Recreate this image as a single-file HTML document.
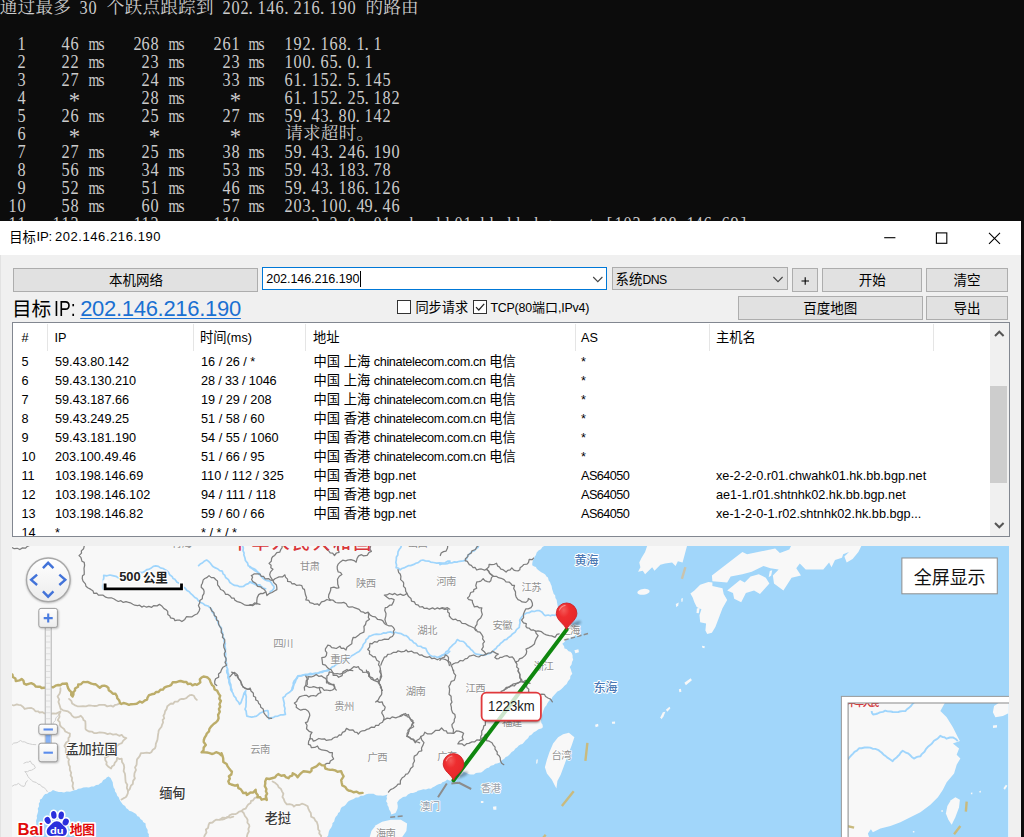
<!DOCTYPE html>
<html lang="zh"><head><meta charset="utf-8"><title>目标IP: 202.146.216.190</title>
<style>
html,body{margin:0;padding:0}
body{width:1024px;height:837px;overflow:hidden;position:relative;background:#0c0c0c;font-family:"Liberation Sans","Noto Sans CJK SC",sans-serif;font-size:13px;color:#000}
.cj{display:inline-block;white-space:nowrap;line-height:1}
.z{font-size:13.3px;letter-spacing:0}
.mt{font-family:"Liberation Sans","Noto Sans CJK SC",sans-serif}
.abs{position:absolute}
#term{position:absolute;left:0;top:0;width:1024px;height:221px;background:#0c0c0c;overflow:hidden}
.tl{position:absolute;left:-1.3px;height:18px;width:1024px}
.tc,.tc2{position:absolute;top:0;height:18px;line-height:18px;color:#ccc;font-family:"Liberation Serif","Noto Serif CJK SC",serif;font-size:17.5px;text-align:center}
.tc{width:8.92px;transform-origin:50% 83%;transform:translateY(-.4px) scale(.93,1.1)}
.tc2{width:17.84px;font-size:17.6px;transform:translate(.9px,-.6px)}
.tm{transform:translate(-.3px,-.4px) scale(.8,1.06)}
.tp{transform:translate(-2.2px,-.4px) scale(1,1.1)}
.ta{transform:translateY(4.2px) scale(1.3,1.35)}
#win{position:absolute;left:0;top:220.5px;width:1021px;height:620px;background:#f0f0f0;overflow:hidden}
#titlebar{position:absolute;left:0;top:0;width:1021px;height:34.3px;background:#fff}
#title{position:absolute;left:10px;top:9px;font-size:13.2px;line-height:16px;white-space:nowrap;letter-spacing:.05px}
.btn{position:absolute;box-sizing:border-box;background:#e1e1e1;border:1px solid #adadad;text-align:center;white-space:nowrap}
.btn .cj{position:absolute;left:50%;top:50%;transform:translate(-50%,-47%)}
.lc{position:absolute;white-space:nowrap;font-size:12.7px;line-height:16px;color:#000}
.hc{position:absolute;white-space:nowrap;font-size:12.7px;line-height:16px;color:#000}
</style></head><body>
<div id="term"><div class="tl" role="img" aria-label="通过最多 30 个跃点跟踪到 202.146.216.190 的路由" style="top:-1.0px"><span class="tc2" style="left:0.00px">通</span><span class="tc2" style="left:17.84px">过</span><span class="tc2" style="left:35.68px">最</span><span class="tc2" style="left:53.52px">多</span><span class="tc" style="left:80.28px">3</span><span class="tc" style="left:89.20px">0</span><span class="tc2" style="left:107.04px">个</span><span class="tc2" style="left:124.88px">跃</span><span class="tc2" style="left:142.72px">点</span><span class="tc2" style="left:160.56px">跟</span><span class="tc2" style="left:178.40px">踪</span><span class="tc2" style="left:196.24px">到</span><span class="tc" style="left:223.00px">2</span><span class="tc" style="left:231.92px">0</span><span class="tc" style="left:240.84px">2</span><span class="tc tp" style="left:249.76px">.</span><span class="tc" style="left:258.68px">1</span><span class="tc" style="left:267.60px">4</span><span class="tc" style="left:276.52px">6</span><span class="tc tp" style="left:285.44px">.</span><span class="tc" style="left:294.36px">2</span><span class="tc" style="left:303.28px">1</span><span class="tc" style="left:312.20px">6</span><span class="tc tp" style="left:321.12px">.</span><span class="tc" style="left:330.04px">1</span><span class="tc" style="left:338.96px">9</span><span class="tc" style="left:347.88px">0</span><span class="tc2" style="left:365.72px">的</span><span class="tc2" style="left:383.56px">路</span><span class="tc2" style="left:401.40px">由</span></div><div class="tl" role="img" aria-label="1    46 ms   268 ms   261 ms  192.168.1.1" style="top:35.0px"><span class="tc" style="left:17.84px">1</span><span class="tc" style="left:62.44px">4</span><span class="tc" style="left:71.36px">6</span><span class="tc tm" style="left:89.20px">m</span><span class="tc" style="left:98.12px">s</span><span class="tc" style="left:133.80px">2</span><span class="tc" style="left:142.72px">6</span><span class="tc" style="left:151.64px">8</span><span class="tc tm" style="left:169.48px">m</span><span class="tc" style="left:178.40px">s</span><span class="tc" style="left:214.08px">2</span><span class="tc" style="left:223.00px">6</span><span class="tc" style="left:231.92px">1</span><span class="tc tm" style="left:249.76px">m</span><span class="tc" style="left:258.68px">s</span><span class="tc" style="left:285.44px">1</span><span class="tc" style="left:294.36px">9</span><span class="tc" style="left:303.28px">2</span><span class="tc tp" style="left:312.20px">.</span><span class="tc" style="left:321.12px">1</span><span class="tc" style="left:330.04px">6</span><span class="tc" style="left:338.96px">8</span><span class="tc tp" style="left:347.88px">.</span><span class="tc" style="left:356.80px">1</span><span class="tc tp" style="left:365.72px">.</span><span class="tc" style="left:374.64px">1</span></div><div class="tl" role="img" aria-label="2    22 ms    23 ms    23 ms  100.65.0.1" style="top:53.0px"><span class="tc" style="left:17.84px">2</span><span class="tc" style="left:62.44px">2</span><span class="tc" style="left:71.36px">2</span><span class="tc tm" style="left:89.20px">m</span><span class="tc" style="left:98.12px">s</span><span class="tc" style="left:142.72px">2</span><span class="tc" style="left:151.64px">3</span><span class="tc tm" style="left:169.48px">m</span><span class="tc" style="left:178.40px">s</span><span class="tc" style="left:223.00px">2</span><span class="tc" style="left:231.92px">3</span><span class="tc tm" style="left:249.76px">m</span><span class="tc" style="left:258.68px">s</span><span class="tc" style="left:285.44px">1</span><span class="tc" style="left:294.36px">0</span><span class="tc" style="left:303.28px">0</span><span class="tc tp" style="left:312.20px">.</span><span class="tc" style="left:321.12px">6</span><span class="tc" style="left:330.04px">5</span><span class="tc tp" style="left:338.96px">.</span><span class="tc" style="left:347.88px">0</span><span class="tc tp" style="left:356.80px">.</span><span class="tc" style="left:365.72px">1</span></div><div class="tl" role="img" aria-label="3    27 ms    24 ms    33 ms  61.152.5.145" style="top:71.0px"><span class="tc" style="left:17.84px">3</span><span class="tc" style="left:62.44px">2</span><span class="tc" style="left:71.36px">7</span><span class="tc tm" style="left:89.20px">m</span><span class="tc" style="left:98.12px">s</span><span class="tc" style="left:142.72px">2</span><span class="tc" style="left:151.64px">4</span><span class="tc tm" style="left:169.48px">m</span><span class="tc" style="left:178.40px">s</span><span class="tc" style="left:223.00px">3</span><span class="tc" style="left:231.92px">3</span><span class="tc tm" style="left:249.76px">m</span><span class="tc" style="left:258.68px">s</span><span class="tc" style="left:285.44px">6</span><span class="tc" style="left:294.36px">1</span><span class="tc tp" style="left:303.28px">.</span><span class="tc" style="left:312.20px">1</span><span class="tc" style="left:321.12px">5</span><span class="tc" style="left:330.04px">2</span><span class="tc tp" style="left:338.96px">.</span><span class="tc" style="left:347.88px">5</span><span class="tc tp" style="left:356.80px">.</span><span class="tc" style="left:365.72px">1</span><span class="tc" style="left:374.64px">4</span><span class="tc" style="left:383.56px">5</span></div><div class="tl" role="img" aria-label="4     *       28 ms     *     61.152.25.182" style="top:89.0px"><span class="tc" style="left:17.84px">4</span><span class="tc ta" style="left:71.36px">*</span><span class="tc" style="left:142.72px">2</span><span class="tc" style="left:151.64px">8</span><span class="tc tm" style="left:169.48px">m</span><span class="tc" style="left:178.40px">s</span><span class="tc ta" style="left:231.92px">*</span><span class="tc" style="left:285.44px">6</span><span class="tc" style="left:294.36px">1</span><span class="tc tp" style="left:303.28px">.</span><span class="tc" style="left:312.20px">1</span><span class="tc" style="left:321.12px">5</span><span class="tc" style="left:330.04px">2</span><span class="tc tp" style="left:338.96px">.</span><span class="tc" style="left:347.88px">2</span><span class="tc" style="left:356.80px">5</span><span class="tc tp" style="left:365.72px">.</span><span class="tc" style="left:374.64px">1</span><span class="tc" style="left:383.56px">8</span><span class="tc" style="left:392.48px">2</span></div><div class="tl" role="img" aria-label="5    26 ms    25 ms    27 ms  59.43.80.142" style="top:107.0px"><span class="tc" style="left:17.84px">5</span><span class="tc" style="left:62.44px">2</span><span class="tc" style="left:71.36px">6</span><span class="tc tm" style="left:89.20px">m</span><span class="tc" style="left:98.12px">s</span><span class="tc" style="left:142.72px">2</span><span class="tc" style="left:151.64px">5</span><span class="tc tm" style="left:169.48px">m</span><span class="tc" style="left:178.40px">s</span><span class="tc" style="left:223.00px">2</span><span class="tc" style="left:231.92px">7</span><span class="tc tm" style="left:249.76px">m</span><span class="tc" style="left:258.68px">s</span><span class="tc" style="left:285.44px">5</span><span class="tc" style="left:294.36px">9</span><span class="tc tp" style="left:303.28px">.</span><span class="tc" style="left:312.20px">4</span><span class="tc" style="left:321.12px">3</span><span class="tc tp" style="left:330.04px">.</span><span class="tc" style="left:338.96px">8</span><span class="tc" style="left:347.88px">0</span><span class="tc tp" style="left:356.80px">.</span><span class="tc" style="left:365.72px">1</span><span class="tc" style="left:374.64px">4</span><span class="tc" style="left:383.56px">2</span></div><div class="tl" role="img" aria-label="6     *        *        *     请求超时。" style="top:125.0px"><span class="tc" style="left:17.84px">6</span><span class="tc ta" style="left:71.36px">*</span><span class="tc ta" style="left:151.64px">*</span><span class="tc ta" style="left:231.92px">*</span><span class="tc2" style="left:285.44px">请</span><span class="tc2" style="left:303.28px">求</span><span class="tc2" style="left:321.12px">超</span><span class="tc2" style="left:338.96px">时</span><span class="tc2" style="left:356.80px">。</span></div><div class="tl" role="img" aria-label="7    27 ms    25 ms    38 ms  59.43.246.190" style="top:143.0px"><span class="tc" style="left:17.84px">7</span><span class="tc" style="left:62.44px">2</span><span class="tc" style="left:71.36px">7</span><span class="tc tm" style="left:89.20px">m</span><span class="tc" style="left:98.12px">s</span><span class="tc" style="left:142.72px">2</span><span class="tc" style="left:151.64px">5</span><span class="tc tm" style="left:169.48px">m</span><span class="tc" style="left:178.40px">s</span><span class="tc" style="left:223.00px">3</span><span class="tc" style="left:231.92px">8</span><span class="tc tm" style="left:249.76px">m</span><span class="tc" style="left:258.68px">s</span><span class="tc" style="left:285.44px">5</span><span class="tc" style="left:294.36px">9</span><span class="tc tp" style="left:303.28px">.</span><span class="tc" style="left:312.20px">4</span><span class="tc" style="left:321.12px">3</span><span class="tc tp" style="left:330.04px">.</span><span class="tc" style="left:338.96px">2</span><span class="tc" style="left:347.88px">4</span><span class="tc" style="left:356.80px">6</span><span class="tc tp" style="left:365.72px">.</span><span class="tc" style="left:374.64px">1</span><span class="tc" style="left:383.56px">9</span><span class="tc" style="left:392.48px">0</span></div><div class="tl" role="img" aria-label="8    56 ms    34 ms    53 ms  59.43.183.78" style="top:161.0px"><span class="tc" style="left:17.84px">8</span><span class="tc" style="left:62.44px">5</span><span class="tc" style="left:71.36px">6</span><span class="tc tm" style="left:89.20px">m</span><span class="tc" style="left:98.12px">s</span><span class="tc" style="left:142.72px">3</span><span class="tc" style="left:151.64px">4</span><span class="tc tm" style="left:169.48px">m</span><span class="tc" style="left:178.40px">s</span><span class="tc" style="left:223.00px">5</span><span class="tc" style="left:231.92px">3</span><span class="tc tm" style="left:249.76px">m</span><span class="tc" style="left:258.68px">s</span><span class="tc" style="left:285.44px">5</span><span class="tc" style="left:294.36px">9</span><span class="tc tp" style="left:303.28px">.</span><span class="tc" style="left:312.20px">4</span><span class="tc" style="left:321.12px">3</span><span class="tc tp" style="left:330.04px">.</span><span class="tc" style="left:338.96px">1</span><span class="tc" style="left:347.88px">8</span><span class="tc" style="left:356.80px">3</span><span class="tc tp" style="left:365.72px">.</span><span class="tc" style="left:374.64px">7</span><span class="tc" style="left:383.56px">8</span></div><div class="tl" role="img" aria-label="9    52 ms    51 ms    46 ms  59.43.186.126" style="top:179.0px"><span class="tc" style="left:17.84px">9</span><span class="tc" style="left:62.44px">5</span><span class="tc" style="left:71.36px">2</span><span class="tc tm" style="left:89.20px">m</span><span class="tc" style="left:98.12px">s</span><span class="tc" style="left:142.72px">5</span><span class="tc" style="left:151.64px">1</span><span class="tc tm" style="left:169.48px">m</span><span class="tc" style="left:178.40px">s</span><span class="tc" style="left:223.00px">4</span><span class="tc" style="left:231.92px">6</span><span class="tc tm" style="left:249.76px">m</span><span class="tc" style="left:258.68px">s</span><span class="tc" style="left:285.44px">5</span><span class="tc" style="left:294.36px">9</span><span class="tc tp" style="left:303.28px">.</span><span class="tc" style="left:312.20px">4</span><span class="tc" style="left:321.12px">3</span><span class="tc tp" style="left:330.04px">.</span><span class="tc" style="left:338.96px">1</span><span class="tc" style="left:347.88px">8</span><span class="tc" style="left:356.80px">6</span><span class="tc tp" style="left:365.72px">.</span><span class="tc" style="left:374.64px">1</span><span class="tc" style="left:383.56px">2</span><span class="tc" style="left:392.48px">6</span></div><div class="tl" role="img" aria-label="10    58 ms    60 ms    57 ms  203.100.49.46" style="top:197.0px"><span class="tc" style="left:8.92px">1</span><span class="tc" style="left:17.84px">0</span><span class="tc" style="left:62.44px">5</span><span class="tc" style="left:71.36px">8</span><span class="tc tm" style="left:89.20px">m</span><span class="tc" style="left:98.12px">s</span><span class="tc" style="left:142.72px">6</span><span class="tc" style="left:151.64px">0</span><span class="tc tm" style="left:169.48px">m</span><span class="tc" style="left:178.40px">s</span><span class="tc" style="left:223.00px">5</span><span class="tc" style="left:231.92px">7</span><span class="tc tm" style="left:249.76px">m</span><span class="tc" style="left:258.68px">s</span><span class="tc" style="left:285.44px">2</span><span class="tc" style="left:294.36px">0</span><span class="tc" style="left:303.28px">3</span><span class="tc tp" style="left:312.20px">.</span><span class="tc" style="left:321.12px">1</span><span class="tc" style="left:330.04px">0</span><span class="tc" style="left:338.96px">0</span><span class="tc tp" style="left:347.88px">.</span><span class="tc" style="left:356.80px">4</span><span class="tc" style="left:365.72px">9</span><span class="tc tp" style="left:374.64px">.</span><span class="tc" style="left:383.56px">4</span><span class="tc" style="left:392.48px">6</span></div><div class="tl" role="img" aria-label="11   113 ms   112 ms   110 ms  xe-2-2-0.r01.chwahk01.hk.bb.bgp.net [103.198.146.69]" style="top:215.0px"><span class="tc" style="left:8.92px">1</span><span class="tc" style="left:17.84px">1</span><span class="tc" style="left:53.52px">1</span><span class="tc" style="left:62.44px">1</span><span class="tc" style="left:71.36px">3</span><span class="tc tm" style="left:89.20px">m</span><span class="tc" style="left:98.12px">s</span><span class="tc" style="left:133.80px">1</span><span class="tc" style="left:142.72px">1</span><span class="tc" style="left:151.64px">2</span><span class="tc tm" style="left:169.48px">m</span><span class="tc" style="left:178.40px">s</span><span class="tc" style="left:214.08px">1</span><span class="tc" style="left:223.00px">1</span><span class="tc" style="left:231.92px">0</span><span class="tc tm" style="left:249.76px">m</span><span class="tc" style="left:258.68px">s</span><span class="tc" style="left:285.44px">x</span><span class="tc" style="left:294.36px">e</span><span class="tc" style="left:303.28px">-</span><span class="tc" style="left:312.20px">2</span><span class="tc" style="left:321.12px">-</span><span class="tc" style="left:330.04px">2</span><span class="tc" style="left:338.96px">-</span><span class="tc" style="left:347.88px">0</span><span class="tc tp" style="left:356.80px">.</span><span class="tc" style="left:365.72px">r</span><span class="tc" style="left:374.64px">0</span><span class="tc" style="left:383.56px">1</span><span class="tc tp" style="left:392.48px">.</span><span class="tc" style="left:401.40px">c</span><span class="tc" style="left:410.32px">h</span><span class="tc" style="left:419.24px">w</span><span class="tc" style="left:428.16px">a</span><span class="tc" style="left:437.08px">h</span><span class="tc" style="left:446.00px">k</span><span class="tc" style="left:454.92px">0</span><span class="tc" style="left:463.84px">1</span><span class="tc tp" style="left:472.76px">.</span><span class="tc" style="left:481.68px">h</span><span class="tc" style="left:490.60px">k</span><span class="tc tp" style="left:499.52px">.</span><span class="tc" style="left:508.44px">b</span><span class="tc" style="left:517.36px">b</span><span class="tc tp" style="left:526.28px">.</span><span class="tc" style="left:535.20px">b</span><span class="tc" style="left:544.12px">g</span><span class="tc" style="left:553.04px">p</span><span class="tc tp" style="left:561.96px">.</span><span class="tc" style="left:570.88px">n</span><span class="tc" style="left:579.80px">e</span><span class="tc" style="left:588.72px">t</span><span class="tc" style="left:606.56px">[</span><span class="tc" style="left:615.48px">1</span><span class="tc" style="left:624.40px">0</span><span class="tc" style="left:633.32px">3</span><span class="tc tp" style="left:642.24px">.</span><span class="tc" style="left:651.16px">1</span><span class="tc" style="left:660.08px">9</span><span class="tc" style="left:669.00px">8</span><span class="tc tp" style="left:677.92px">.</span><span class="tc" style="left:686.84px">1</span><span class="tc" style="left:695.76px">4</span><span class="tc" style="left:704.68px">6</span><span class="tc tp" style="left:713.60px">.</span><span class="tc" style="left:722.52px">6</span><span class="tc" style="left:731.44px">9</span><span class="tc" style="left:740.36px">]</span></div></div>
<div id="win">
 <div id="titlebar">
  <div class="abs" style="left:9.3px;top:9.2px;line-height:16px;white-space:nowrap"><span class="z">目标</span></div>
  <div class="abs" style="left:36.6px;top:8.6px;font-size:13.2px;line-height:16px;white-space:nowrap;letter-spacing:-.3px">IP:</div>
  <div class="abs" style="left:55px;top:8.6px;font-size:13px;line-height:16px;white-space:nowrap;letter-spacing:.56px">202.146.216.190</div>
  <svg class="abs" style="left:870px;top:0" width="151" height="34" viewBox="870 220.5 151 34" fill="none" stroke="#000" stroke-width="1.1">
   <path d="M884.2 237.2H895.4"/>
   <rect x="936.4" y="232.4" width="10.4" height="10.4"/>
   <path d="M989 232.4L1000 243.4M1000 232.4L989 243.4"/>
  </svg>
 </div>
</div>
<!-- client controls: coordinates are page-absolute -->
<div id="client" class="abs" style="left:0;top:0;width:1021px;height:837px;overflow:hidden">
 <div class="abs" style="left:0;top:255px;width:1px;height:600px;background:#e2e2e2"></div>
 <div class="btn" style="left:13.3px;top:268.2px;width:245.2px;height:23.6px"><span class="cj" style="font-size:13.5px">本机网络</span></div>
 <div class="abs" style="left:262.2px;top:267.2px;width:345.2px;height:23px;box-sizing:border-box;border:1px solid #0078d7;background:#fff"></div>
 <span class="abs" style="left:266.3px;top:270.5px;font-size:12.6px;line-height:16px;white-space:nowrap;letter-spacing:-.1px">202.146.216.190</span>
 <div class="abs" style="left:360.3px;top:271px;width:1px;height:15.5px;background:#000"></div>
 <svg class="abs" style="left:590px;top:270px" width="16" height="16" viewBox="590 270 16 16" fill="none" stroke="#444" stroke-width="1.1"><path d="M593.2 277L597.8 281.6L602.4 277"/></svg>
 <div class="btn" style="left:611.6px;top:267.4px;width:176.2px;height:23px;text-align:left"></div>
 <span class="abs" style="left:615.6px;top:272px;font-size:12.2px;line-height:16px;white-space:nowrap;letter-spacing:-.55px"><span style="font-size:13.4px;letter-spacing:0">系统</span>DNS</span>
 <svg class="abs" style="left:770px;top:270px" width="16" height="16" viewBox="770 270 16 16" fill="none" stroke="#444" stroke-width="1.1"><path d="M773.4 277L778 281.6L782.6 277"/></svg>
 <div class="btn" style="left:791.8px;top:268.2px;width:26.2px;height:23.6px"></div>
 <svg class="abs" style="left:798px;top:273px" width="14" height="14" viewBox="798 273 14 14" stroke="#000" stroke-width="1.1"><path d="M801.5 281H809M805.2 277.3V284.7"/></svg>
 <div class="btn" style="left:821.9px;top:268.2px;width:100.6px;height:23.6px"><span class="cj" style="font-size:13.5px">开始</span></div>
 <div class="btn" style="left:926.2px;top:268.2px;width:81.6px;height:23.6px"><span class="cj" style="font-size:13.5px">清空</span></div>
 <div class="btn" style="left:738px;top:296.3px;width:184.5px;height:23.4px"><span class="cj" style="font-size:13.5px">百度地图</span></div>
 <div class="btn" style="left:926.2px;top:296.3px;width:81.6px;height:23.4px"><span class="cj" style="font-size:13.5px">导出</span></div>
 <!-- row 2 -->
 <div class="abs" style="left:11.9px;top:296px;font-size:20.6px;line-height:26px;white-space:nowrap"><span style="font-size:19.7px">目标</span></div>
 <div class="abs" style="left:54px;top:296.3px;font-size:22px;line-height:26px;white-space:nowrap;transform-origin:0 0;transform:scaleX(.8)">IP:</div>
 <div class="abs" style="left:80.2px;top:296.3px;font-size:22px;line-height:26px;white-space:nowrap;letter-spacing:-.3px;color:#1a70d2;text-decoration:underline;text-decoration-thickness:1.4px;text-underline-offset:1.9px">202.146.216.190</div>
 <div class="abs" style="left:396.8px;top:300.2px;width:14px;height:14px;box-sizing:border-box;border:1px solid #333;background:#fff"></div>
 <div class="abs" style="left:415.4px;top:299.6px;line-height:16px;white-space:nowrap"><span style="font-size:13.2px">同步请求</span></div>
 <div class="abs" style="left:473.4px;top:300.2px;width:14px;height:14px;box-sizing:border-box;border:1px solid #333;background:#fff"></div>
 <svg class="abs" style="left:473.4px;top:300.2px" width="14" height="14" viewBox="0 0 14 14" fill="none" stroke="#222" stroke-width="1.2"><path d="M3 7.2L5.8 10L11.2 3.8"/></svg>
 <span class="abs" style="left:490.4px;top:300.4px;font-size:12.4px;line-height:16px;white-space:nowrap;letter-spacing:-.2px">TCP(80<span style="font-size:13px;letter-spacing:0">端口</span>,IPv4)</span>
 <!-- listview -->
 <div class="abs" style="left:12px;top:322.3px;width:998px;height:214.8px;box-sizing:border-box;border:1px solid #828790;background:#fff"></div>
 <div class="abs" style="left:13.5px;top:323.3px;width:976px;height:212.8px;overflow:hidden">
  <div style="position:absolute;left:-13.5px;top:-323.3px">
   <div class="abs" style="left:47.3px;top:324px;width:1px;height:26.5px;background:#e5e5e5"></div>
   <div class="abs" style="left:193px;top:324px;width:1px;height:26.5px;background:#e5e5e5"></div>
   <div class="abs" style="left:305.3px;top:324px;width:1px;height:26.5px;background:#e5e5e5"></div>
   <div class="abs" style="left:575px;top:324px;width:1px;height:26.5px;background:#e5e5e5"></div>
   <div class="abs" style="left:709.3px;top:324px;width:1px;height:26.5px;background:#e5e5e5"></div>
   <div class="abs" style="left:933px;top:324px;width:1px;height:26.5px;background:#e5e5e5"></div>
   <span class="hc" style="left:21.5px;top:330.3px">#</span>
   <span class="hc" style="left:54.5px;top:330.3px">IP</span>
   <span class="hc" style="left:200px;top:330.3px"><span class="z">时间</span>(ms)</span>
   <span class="hc" style="left:313px;top:330.3px"><span class="z">地址</span></span>
   <span class="hc" style="left:581px;top:330.3px">AS</span>
   <span class="hc" style="left:716px;top:330.3px"><span class="z">主机名</span></span>
   <span class="lc" style="left:21.5px;top:353.9px">5</span><span class="lc" style="left:55.0px;top:353.9px">59.43.80.142</span><span class="lc" style="left:201.0px;top:353.9px">16 / 26 / *</span><span class="lc" style="left:313.5px;top:353.9px"><span class="z">中国</span> <span class="z">上海</span> <span style="letter-spacing:-0.38px">chinatelecom.com.cn</span> <span class="z">电信</span></span><span class="lc" style="left:581.0px;top:353.9px">*</span><span class="lc" style="left:21.5px;top:373.0px">6</span><span class="lc" style="left:55.0px;top:373.0px">59.43.130.210</span><span class="lc" style="left:201.0px;top:373.0px"><span style="letter-spacing:-0.15px">28 / 33 / 1046</span></span><span class="lc" style="left:313.5px;top:373.0px"><span class="z">中国</span> <span class="z">上海</span> <span style="letter-spacing:-0.38px">chinatelecom.com.cn</span> <span class="z">电信</span></span><span class="lc" style="left:581.0px;top:373.0px">*</span><span class="lc" style="left:21.5px;top:392.0px">7</span><span class="lc" style="left:55.0px;top:392.0px">59.43.187.66</span><span class="lc" style="left:201.0px;top:392.0px">19 / 29 / 208</span><span class="lc" style="left:313.5px;top:392.0px"><span class="z">中国</span> <span class="z">上海</span> <span style="letter-spacing:-0.38px">chinatelecom.com.cn</span> <span class="z">电信</span></span><span class="lc" style="left:581.0px;top:392.0px">*</span><span class="lc" style="left:21.5px;top:411.1px">8</span><span class="lc" style="left:55.0px;top:411.1px">59.43.249.25</span><span class="lc" style="left:201.0px;top:411.1px">51 / 58 / 60</span><span class="lc" style="left:313.5px;top:411.1px"><span class="z">中国</span> <span class="z">香港</span> <span style="letter-spacing:-0.38px">chinatelecom.com.cn</span> <span class="z">电信</span></span><span class="lc" style="left:581.0px;top:411.1px">*</span><span class="lc" style="left:21.5px;top:430.1px">9</span><span class="lc" style="left:55.0px;top:430.1px">59.43.181.190</span><span class="lc" style="left:201.0px;top:430.1px">54 / 55 / 1060</span><span class="lc" style="left:313.5px;top:430.1px"><span class="z">中国</span> <span class="z">香港</span> <span style="letter-spacing:-0.38px">chinatelecom.com.cn</span> <span class="z">电信</span></span><span class="lc" style="left:581.0px;top:430.1px">*</span><span class="lc" style="left:21.5px;top:449.2px">10</span><span class="lc" style="left:55.0px;top:449.2px">203.100.49.46</span><span class="lc" style="left:201.0px;top:449.2px">51 / 66 / 95</span><span class="lc" style="left:313.5px;top:449.2px"><span class="z">中国</span> <span class="z">香港</span> <span style="letter-spacing:-0.38px">chinatelecom.com.cn</span> <span class="z">电信</span></span><span class="lc" style="left:581.0px;top:449.2px">*</span><span class="lc" style="left:21.5px;top:468.3px">11</span><span class="lc" style="left:55.0px;top:468.3px">103.198.146.69</span><span class="lc" style="left:201.0px;top:468.3px">110 / 112 / 325</span><span class="lc" style="left:313.5px;top:468.3px"><span class="z">中国</span> <span class="z">香港</span> bgp.net</span><span class="lc" style="left:581.0px;top:468.3px"><span style="letter-spacing:-0.56px">AS64050</span></span><span class="lc" style="left:716.0px;top:468.3px">xe-2-2-0.r01.chwahk01.hk.bb.bgp.net</span><span class="lc" style="left:21.5px;top:487.3px">12</span><span class="lc" style="left:55.0px;top:487.3px">103.198.146.102</span><span class="lc" style="left:201.0px;top:487.3px">94 / 111 / 118</span><span class="lc" style="left:313.5px;top:487.3px"><span class="z">中国</span> <span class="z">香港</span> bgp.net</span><span class="lc" style="left:581.0px;top:487.3px"><span style="letter-spacing:-0.56px">AS64050</span></span><span class="lc" style="left:716.0px;top:487.3px">ae1-1.r01.shtnhk02.hk.bb.bgp.net</span><span class="lc" style="left:21.5px;top:506.4px">13</span><span class="lc" style="left:55.0px;top:506.4px">103.198.146.82</span><span class="lc" style="left:201.0px;top:506.4px">59 / 60 / 66</span><span class="lc" style="left:313.5px;top:506.4px"><span class="z">中国</span> <span class="z">香港</span> bgp.net</span><span class="lc" style="left:581.0px;top:506.4px"><span style="letter-spacing:-0.56px">AS64050</span></span><span class="lc" style="left:716.0px;top:506.4px">xe-1-2-0-1.r02.shtnhk02.hk.bb.bgp...</span><span class="lc" style="left:21.5px;top:525.4px">14</span><span class="lc" style="left:55.0px;top:525.4px">*</span><span class="lc" style="left:201.0px;top:525.4px">* / * / *</span>
  </div>
 </div>
 <!-- scrollbar -->
 <div class="abs" style="left:990px;top:323.3px;width:19px;height:212.8px;background:#f0f0f0"></div>
 <div class="abs" style="left:990px;top:386.2px;width:17.2px;height:96.6px;background:#cdcdcd"></div>
 <svg class="abs" style="left:990px;top:323px" width="19" height="213" viewBox="990 323 19 213" fill="none" stroke="#555" stroke-width="2"><path d="M995 336L999.3 331.7L1003.6 336"/><path d="M995 523L999.3 527.3L1003.6 523"/></svg>
<svg class="abs" style="left:12.1px;top:545.8px" width="997.1" height="291.2" viewBox="12.1 545.8 997.1 291.2"><rect x="0" y="540" width="1024" height="300" fill="#a1d6fa"/><path d="M4.0 538.0L7.0 538.2L8.5 537.7L11.1 538.4L13.2 537.6L16.4 538.4L18.8 537.7L20.9 537.6L23.0 538.3L25.6 537.6L27.8 538.3L31.0 537.6L33.0 538.2L34.8 537.6L37.5 537.7L39.5 537.7L42.4 538.2L45.2 537.8L47.7 538.3L50.1 537.6L52.2 538.3L54.9 537.8L56.5 538.2L59.4 537.7L62.1 538.1L64.2 538.2L66.6 537.8L69.2 538.1L71.7 538.3L73.1 537.6L75.9 538.3L78.1 537.6L81.4 538.2L82.7 537.5L86.2 537.5L87.8 538.2L91.0 537.6L92.8 537.5L95.1 537.7L97.8 538.4L100.1 538.1L101.9 537.5L104.6 538.3L106.8 537.7L110.0 537.5L112.4 538.2L115.0 538.1L117.2 537.5L119.3 538.2L121.1 537.6L124.3 538.3L126.3 537.4L128.6 538.1L131.3 537.7L133.9 538.1L136.5 538.2L138.3 537.5L140.5 538.1L143.9 537.6L146.2 538.3L148.1 538.2L150.2 537.6L152.6 537.5L155.0 538.2L157.4 538.2L160.6 538.1L163.1 538.2L164.5 538.2L167.7 537.5L169.7 538.0L172.5 537.6L175.0 538.1L176.4 537.6L179.9 537.6L182.0 538.0L184.0 537.7L187.1 537.6L189.0 538.0L191.5 537.6L193.3 537.6L195.7 538.3L199.1 538.1L200.8 537.5L202.8 538.1L205.7 538.1L207.8 538.2L211.1 538.1L213.1 538.2L215.3 538.2L217.3 537.4L220.5 537.5L222.5 538.1L224.5 538.0L227.3 537.5L230.1 538.0L232.6 537.4L235.0 538.2L236.7 538.0L239.7 538.0L242.1 538.0L244.1 538.1L246.2 538.1L248.8 538.2L251.4 537.6L253.6 538.2L256.5 537.9L258.8 537.6L261.4 538.1L263.2 537.4L266.0 538.1L268.5 537.4L270.4 538.1L272.5 538.0L275.3 537.5L278.0 537.4L280.7 538.0L282.2 537.9L285.0 537.5L288.0 537.9L290.4 537.5L292.6 538.1L294.3 537.4L297.5 537.9L299.5 537.3L301.6 537.9L304.6 537.5L306.3 537.3L309.1 538.0L311.8 537.5L314.1 537.3L316.7 538.0L319.2 537.9L320.5 537.3L323.2 538.0L325.9 537.3L328.6 537.3L330.3 537.3L333.2 538.0L335.2 537.2L338.0 538.0L340.8 537.4L342.9 538.0L345.4 537.9L347.4 537.5L349.7 538.0L352.1 537.4L354.7 538.0L356.6 537.5L359.5 537.4L362.5 538.1L364.2 537.2L366.8 537.9L369.2 538.0L371.3 538.0L373.9 538.0L376.3 537.4L378.2 538.0L381.4 537.3L383.5 537.3L386.2 537.9L388.6 537.2L390.8 537.9L392.7 537.4L395.5 537.9L397.6 537.4L400.4 537.8L403.2 537.9L405.0 538.0L407.5 538.1L410.1 537.4L412.7 537.2L414.3 537.9L417.3 537.3L419.9 537.9L422.5 537.4L423.8 537.3L426.2 537.2L429.4 537.8L431.8 537.3L434.1 537.3L436.4 537.4L439.3 538.0L440.6 537.4L443.2 537.8L445.8 537.4L448.4 537.8L451.4 537.9L452.8 537.2L455.3 537.9L458.3 537.4L461.0 537.8L462.8 537.3L465.7 537.9L467.3 537.2L469.9 537.9L472.3 537.2L475.3 537.8L477.3 537.2L479.9 537.7L481.5 538.0L484.4 537.3L487.0 537.8L489.7 537.1L491.9 537.7L493.5 537.2L497.0 537.4L498.6 537.7L500.7 537.2L503.9 537.8L506.6 537.4L508.3 537.9L510.5 537.3L512.8 537.7L515.5 537.2L518.5 537.9L520.4 537.3L522.4 538.0L525.8 537.1L527.1 537.8L529.5 537.8L532.5 537.1L535.1 537.9L537.3 537.2L539.9 537.7L541.7 537.8L544.5 537.7L544.7 540.3L544.1 542.7L544.9 545.5L542.5 546.8L541.0 549.1L538.6 550.4L536.8 552.3L535.9 555.0L534.6 556.5L534.1 558.2L532.8 560.7L532.4 563.1L532.3 565.0L534.3 566.4L536.1 566.8L536.7 568.4L538.3 569.8L540.3 571.4L541.8 572.2L543.8 573.4L545.3 574.2L546.8 576.5L548.1 577.4L548.7 580.0L550.2 582.1L550.9 584.1L551.7 585.9L552.2 588.9L553.1 591.3L553.6 593.2L555.3 595.4L555.5 597.9L556.8 599.9L557.1 602.0L557.6 604.9L558.0 606.8L557.6 608.7L558.9 611.2L559.6 613.6L561.3 615.6L561.8 617.6L563.8 619.4L566.1 621.0L568.1 622.1L569.8 623.9L572.7 624.8L575.7 626.2L577.4 627.8L578.0 629.0L578.0 631.3L577.0 633.2L575.2 634.6L574.6 636.3L571.9 636.9L570.4 638.2L568.2 638.2L565.9 639.9L564.6 641.7L562.4 643.5L564.2 646.0L564.6 648.2L566.6 648.9L568.7 651.0L570.6 651.5L571.9 653.1L572.7 655.3L572.7 657.3L573.3 659.6L572.1 661.7L571.7 664.3L569.9 666.9L570.9 669.0L571.5 671.2L572.4 673.6L570.5 675.9L570.2 678.6L568.1 681.1L566.8 683.9L564.6 685.6L563.1 687.4L561.0 689.2L559.7 690.4L557.5 691.3L556.2 692.8L554.6 694.6L552.5 696.7L551.8 698.5L549.2 700.5L547.5 703.0L546.3 705.6L545.0 706.7L543.6 709.7L542.8 712.6L542.3 714.4L541.9 716.8L541.1 719.6L541.4 722.7L542.6 724.3L543.0 727.1L541.5 728.2L538.6 729.1L535.9 731.0L533.9 732.0L531.3 734.8L529.4 735.6L528.3 737.9L525.5 740.2L524.3 741.8L522.5 743.8L520.6 744.3L518.9 745.4L517.1 747.2L515.5 748.3L513.9 750.6L511.8 751.8L509.9 754.0L507.8 756.1L505.8 756.7L504.4 758.6L501.5 760.2L500.0 762.3L497.1 763.3L495.2 763.5L493.9 764.9L490.9 765.5L488.8 767.5L487.2 767.8L484.6 769.5L483.4 770.9L481.2 772.3L478.0 772.5L476.0 772.9L474.0 774.2L470.9 774.2L468.4 773.9L466.6 772.7L463.6 771.6L462.2 774.2L460.6 775.1L460.0 777.2L458.0 777.6L455.4 780.0L453.4 780.6L451.7 780.6L449.3 780.3L447.3 779.3L445.4 781.1L442.4 782.1L441.2 783.6L439.3 783.8L437.0 784.9L434.6 786.2L432.5 787.2L431.1 788.5L428.7 788.2L426.0 789.2L423.4 789.0L421.0 789.8L417.8 790.5L416.8 791.6L413.1 792.7L410.9 792.9L408.0 794.4L406.2 796.3L403.1 796.9L401.1 798.2L399.2 799.5L397.3 802.3L397.6 804.2L397.9 805.9L397.7 808.0L397.0 810.1L395.6 812.9L393.5 813.5L391.4 814.2L390.8 811.9L389.1 809.0L388.7 806.9L387.4 804.8L387.6 803.1L386.2 801.1L387.1 798.3L386.6 796.5L387.6 794.3L385.5 795.0L383.1 795.5L380.9 795.3L378.4 795.4L376.2 795.0L373.6 793.6L370.9 793.5L368.6 793.5L366.2 794.0L363.3 795.5L360.9 795.5L358.3 797.2L355.9 797.3L353.7 798.7L351.1 799.9L348.9 800.9L347.4 802.4L346.0 804.3L344.4 805.7L342.0 806.7L340.9 808.4L339.8 811.7L338.2 812.9L337.6 814.9L335.7 816.8L334.9 818.5L334.3 821.2L332.5 823.0L332.5 824.8L331.4 827.2L329.7 829.6L328.9 831.5L328.2 835.2L327.0 836.9L327.2 839.4L326.0 842.2L326.3 844.6L325.3 847.0L323.0 847.2L321.3 847.3L318.7 847.3L315.9 846.8L313.1 847.2L311.7 847.4L308.6 846.7L306.9 846.6L303.4 847.3L301.5 847.4L299.6 846.7L296.5 847.3L294.7 846.7L292.2 847.3L290.0 847.3L286.6 846.6L284.9 847.4L282.5 846.6L279.9 847.2L278.0 847.2L275.4 846.6L273.3 847.2L269.9 846.7L267.9 847.3L265.4 846.8L263.4 846.5L260.7 847.3L258.5 846.7L256.6 846.7L253.8 846.7L251.8 847.4L249.1 846.7L246.1 847.4L244.6 846.7L242.1 847.3L239.8 847.2L237.0 846.6L234.9 847.4L231.9 847.2L230.0 846.7L227.0 847.4L224.4 846.7L222.3 846.5L220.1 847.3L217.7 847.2L215.2 847.2L212.5 846.5L211.1 847.2L208.8 847.3L205.6 846.7L203.7 847.2L200.5 846.5L198.1 847.2L195.8 846.6L193.8 847.3L191.9 846.5L189.4 847.3L186.9 846.7L184.0 847.3L182.4 846.6L178.9 846.6L176.6 847.2L174.1 846.6L172.6 846.7L169.4 847.1L167.6 846.7L164.8 847.1L162.9 846.7L160.7 847.3L158.4 846.5L155.1 847.3L153.7 847.2L150.7 846.5L150.1 844.8L150.4 842.1L149.5 840.7L150.0 838.3L148.8 835.9L149.0 834.0L147.7 832.4L147.8 829.7L146.3 827.4L145.7 825.0L145.7 823.2L143.2 821.7L142.7 820.2L140.6 818.9L139.2 816.6L137.5 816.0L136.2 813.7L134.4 812.8L131.9 811.2L129.2 810.6L128.1 809.0L126.4 808.0L125.2 805.8L123.1 804.6L120.9 801.6L119.7 799.5L118.7 796.9L117.4 795.8L116.4 792.9L115.1 791.2L114.9 789.0L113.7 787.4L113.1 784.7L112.8 782.0L111.9 780.4L110.7 777.9L108.6 776.2L106.7 777.2L105.8 778.5L103.1 780.1L101.9 782.3L100.0 783.3L98.6 784.6L96.2 784.7L93.9 786.4L91.5 786.4L89.0 787.4L86.5 787.0L83.3 787.4L80.9 788.3L78.2 788.6L76.5 789.8L74.1 790.1L72.2 790.8L70.1 791.5L66.7 791.3L64.1 792.3L61.5 791.8L58.8 791.9L57.1 791.2L55.5 790.8L53.0 789.7L51.0 791.6L48.9 792.1L47.4 793.5L45.3 793.9L43.8 795.4L41.8 798.5L39.9 799.5L40.1 801.6L38.9 803.4L39.1 806.0L37.8 808.6L38.3 810.5L37.8 812.8L36.8 815.9L37.1 817.7L36.1 820.8L36.4 823.2L36.0 825.5L34.7 828.1L34.7 829.4L33.4 831.5L33.0 834.5L32.6 835.8L31.7 838.4L31.6 840.1L30.7 842.9L30.8 845.0L30.0 846.9L27.5 847.1L25.3 846.6L22.9 847.0L21.0 846.9L17.9 846.7L16.4 846.1L13.3 846.1L11.3 846.6L9.0 845.7L6.2 845.7L4.0 846.4Z" fill="#f8f8f8"/><path d="M647.6 544.7L687.4 544.7L682.7 562.3L678.0 561.1L675.7 565.8L672.2 562.3L665.2 563.4L660.5 564.6L654.6 570.5L652.3 567.0L645.2 574.0L642.9 570.5L638.2 571.6L640.5 567.0L639.4 562.3L641.7 557.6L645.2 551.7Z" fill="#f8f8f8"/><path d="M690.5 593.4L694.5 590.4L700.3 584.5L708.5 581.7L712.5 582.2L712.5 585.7L722.6 588.0L723.8 593.9L727.3 599.8L722.6 608.0L719.1 617.3L715.5 626.7L712.0 632.6L707.3 633.8L705.5 630.2L706.2 623.2L700.3 622.0L699.6 615.0L701.5 609.1L696.8 606.8L694.5 602.1L692.8 597.4Z" fill="#f8f8f8"/><path d="M712.0 575.2L742.5 551.7L747.2 554.1L775.3 548.2L780.0 552.9L789.4 549.4L791.7 544.7L862.0 544.7L858.5 551.7L852.7 558.8L846.8 562.3L844.5 556.4L849.1 551.7L843.3 554.1L842.1 557.6L835.1 559.9L831.6 567.0L829.2 562.3L823.4 569.3L805.8 569.3L799.9 563.4L796.4 568.1L801.1 575.2L791.7 577.5L783.5 590.4L774.1 583.4L773.0 575.2L778.8 569.3L770.6 568.1L763.6 565.8L751.9 571.6L742.5 574.0L730.8 576.3L727.3 582.2L712.5 581.0Z" fill="#f8f8f8"/><path d="M727.3 590.4L740.2 579.8L744.8 582.2L750.7 576.3L758.9 574.0L765.9 577.5L769.5 583.4L760.1 593.9L754.2 590.4L746.0 592.7L741.3 602.1L734.3 598.6L733.1 592.7Z" fill="#f8f8f8"/><path d="M769.9 570.9L772.3 570.0L771.3 575.2L768.8 577.0Z" fill="#f8f8f8"/><path d="M675.9 603.8L678.8 602.3L678.3 605.2L676.4 607.0Z" fill="#f8f8f8"/><path d="M681.3 598.6L683.0 597.7L682.7 601.4L681.6 601.9Z" fill="#f8f8f8"/><path d="M697.0 608.4L699.8 607.5L698.9 613.1L696.6 612.7Z" fill="#f8f8f8"/><path d="M569.0 732.5L574.5 737.0L572.0 744.5L568.2 754.5L564.5 764.5L560.8 774.5L557.5 780.8L556.5 788.2L554.5 784.5L552.0 779.5L547.0 773.2L545.0 767.0L547.0 759.5L549.5 752.0L553.2 743.2L558.2 737.0L563.2 734.0Z" fill="#f8f8f8"/><path d="M369.8 837.0L371.5 830.8L376.0 825.0L382.2 821.5L391.0 819.5L401.0 819.5L407.2 823.2L406.5 830.8L402.2 837.0Z" fill="#f8f8f8"/><path d="M574.5 650.0L578.5 649.0L579.0 652.0L575.5 653.0Z" fill="#f8f8f8"/><path d="M595.2 724.5L598.2 723.5L598.5 726.0L595.8 727.0Z" fill="#f8f8f8"/><path d="M612.0 721.5L615.2 721.2L615.2 723.5L612.2 723.5Z" fill="#f8f8f8"/><path d="M660.5 717.0L663.0 712.0L665.5 711.5L663.5 716.5L661.5 719.0Z" fill="#f8f8f8"/><path d="M666.0 709.5L669.5 706.5L670.5 708.0L667.5 711.5Z" fill="#f8f8f8"/><path d="M679.0 689.0L681.0 688.5L681.5 691.5L679.5 692.0Z" fill="#f8f8f8"/><path d="M536.5 759.5L538.0 759.0L537.5 763.0L536.2 763.5Z" fill="#f8f8f8"/><path d="M702.0 645.5L705.0 646.0L704.5 648.0L702.5 647.5Z" fill="#f8f8f8"/><path d="M684.5 682.5L690.8 678.0L692.0 680.0L686.0 685.0Z" fill="#f8f8f8"/><path d="M493.0 806.5L496.5 806.0L496.5 809.5L493.5 809.5Z" fill="#f8f8f8"/><path d="M481.0 800.8L483.5 800.8L483.5 802.8L481.0 802.8Z" fill="#f8f8f8"/><ellipse cx="643.6" cy="591.6" rx="6.2" ry="2.9" transform="rotate(-8 643.6 591.6)" fill="#f8f8f8"/><path d="M103.0 588.8L102.7 585.7L103.6 583.0L103.3 579.9L103.9 577.8L103.8 575.1L107.1 575.6L110.0 574.8L112.7 575.4L116.0 576.1L118.4 577.7L120.4 578.5L122.7 577.3L124.9 575.9L127.5 574.0L129.4 573.4L131.5 572.7L135.0 573.0L136.6 572.3L140.0 572.1L142.1 572.5L144.4 571.4L146.8 569.4L148.6 569.2L150.9 568.1L153.4 566.1L155.8 565.6L158.5 566.1L160.5 567.7L163.3 568.3L165.3 569.7L167.1 570.5L168.6 572.2L169.7 574.5L172.3 576.4L173.1 578.2L175.0 579.1L177.1 582.0L179.5 583.0L181.4 584.6L182.5 586.4L185.4 588.0L186.7 590.0L189.4 591.6L190.9 593.5L192.7 594.9L194.9 597.3L197.0 598.4L198.6 600.7L200.8 602.3L203.6 603.6L205.0 604.9L208.1 605.8L210.3 607.6L211.9 609.6L212.5 612.1L214.0 613.5L215.1 616.5L216.0 618.3L217.6 620.3L218.1 622.6L219.5 625.6L221.5 627.7L221.7 631.0L222.7 632.6L223.0 636.3L224.1 638.4L224.2 641.3L225.5 643.4L224.9 645.6L225.6 648.9L225.3 650.9L225.8 654.0L225.4 656.1L226.3 658.8L225.6 661.1L226.7 663.0L226.7 666.8L227.8 669.0L227.9 672.2L228.9 674.6L228.5 676.8L229.6 678.8L229.8 681.8L231.0 684.6L230.8 687.0L232.1 690.0" fill="none" stroke="#9fd5fc" stroke-width="1.7" stroke-linejoin="round" stroke-linecap="round" /><path d="M198.7 565.4L200.3 563.9L202.4 562.8L204.2 561.1L206.7 559.8L208.4 560.9L210.3 562.8L212.7 566.0L214.4 567.2L217.5 568.5L219.8 570.4L222.3 570.9L223.2 573.7L224.9 575.0L225.7 577.3L228.5 579.5L230.0 582.3L232.1 583.7L234.7 585.2L237.3 585.4L239.2 586.4L241.7 586.5L243.5 586.3L245.7 584.4L248.4 583.4L250.2 581.6L252.3 582.3L255.2 583.7L257.7 584.6L260.1 584.6" fill="none" stroke="#9fd5fc" stroke-width="1.7" stroke-linejoin="round" stroke-linecap="round" /><path d="M242.6 545.5L243.4 547.7L243.1 550.4L244.2 552.9L243.9 554.6L245.0 557.5L245.5 560.3L247.7 562.9L248.3 565.5L250.6 566.6L252.5 568.6L255.1 570.6L257.5 571.8L259.8 573.5" fill="none" stroke="#9fd5fc" stroke-width="1.7" stroke-linejoin="round" stroke-linecap="round" /><path d="M292.0 690.0L292.3 687.5L293.5 684.9L293.3 682.8L294.3 680.7L296.0 679.0L297.2 676.9L299.0 675.9L301.7 675.7L303.8 674.8L306.7 675.2L308.6 674.4L311.3 674.5L312.9 673.7L316.0 673.6L318.4 673.0L321.3 671.6L323.3 670.9L325.6 670.8L328.0 669.6L330.2 668.9L332.3 666.7L334.2 666.2L335.5 664.8L337.5 663.5L339.9 662.7L341.7 660.9L344.0 660.5L347.1 658.0L349.8 657.5L351.4 655.7L354.1 654.3L356.3 652.9L359.3 651.2L361.0 649.2L362.7 646.6L363.3 644.3L365.6 641.8L366.1 639.5L367.9 638.1L369.4 635.9L371.0 635.6L374.1 634.3L376.5 633.9L379.0 634.1L381.5 633.8L383.5 632.7L386.4 632.9L387.8 632.1L390.6 631.7L393.7 632.9L395.5 632.1L398.4 633.0L401.4 633.5L404.0 635.1L406.3 635.5L408.5 637.3L410.1 639.5L412.2 640.4L413.8 642.6L415.8 643.3L417.7 645.8L421.1 646.2L422.5 647.5L425.9 648.2L427.1 651.1L428.1 652.7L430.1 655.0L432.6 656.3L434.7 656.1L437.5 657.4L440.1 656.1L443.2 654.9L445.8 654.3L447.9 652.9L449.8 651.1" fill="none" stroke="#9fd5fc" stroke-width="1.7" stroke-linejoin="round" stroke-linecap="round" /><path d="M401.4 545.5L400.9 547.2L399.3 549.3L398.1 551.6L397.9 554.7L396.5 556.7L396.4 559.6L395.9 562.1L396.7 565.1L396.2 567.4L398.7 568.1L400.2 569.7L401.9 568.3L404.9 567.4L406.4 566.6L408.9 565.4L410.7 565.4L414.0 564.2L415.9 563.1L418.3 562.4L420.9 560.3L423.0 559.8L425.5 560.7L428.8 560.9L430.7 561.9L433.6 562.3L436.8 563.0L439.4 562.7L442.4 563.0L445.3 562.6L447.8 560.9L450.1 560.9" fill="none" stroke="#9fd5fc" stroke-width="1.7" stroke-linejoin="round" stroke-linecap="round" /><path d="M250.0 567.3L253.6 568.3L255.7 569.6L257.7 571.9L259.0 574.0L260.7 575.5L262.6 577.6L264.5 579.2L267.1 580.5L269.9 581.0L271.3 582.4L272.4 584.5L274.0 586.2L274.1 588.0L272.3 590.3L270.3 591.6" fill="none" stroke="#9fd5fc" stroke-width="1.7" stroke-linejoin="round" stroke-linecap="round" /><path d="M250.0 582.0L252.5 582.9L254.1 583.6L257.1 585.3L259.8 585.7L261.6 586.4L263.3 587.9L265.7 588.6" fill="none" stroke="#9fd5fc" stroke-width="1.7" stroke-linejoin="round" stroke-linecap="round" /><path d="M440.0 657.2L442.1 655.0L445.1 653.5L446.1 651.6L448.2 650.5L449.7 647.9L451.5 646.2L453.2 644.4L455.5 642.6L457.3 639.4L459.9 640.8L463.5 641.3L465.7 643.4L467.1 645.5L469.5 647.3L471.2 649.6L472.5 650.4L474.0 652.4L476.4 654.0L479.7 654.4L482.6 655.2L484.9 655.0L486.8 654.1L489.8 653.2L492.8 651.5L494.5 649.3L496.1 648.3L497.4 646.2L499.5 644.8L500.5 643.3L502.7 641.7L504.6 639.7L506.8 639.2L508.2 637.5L511.1 635.6L512.2 634.0L515.3 631.9L516.6 629.4L519.4 627.2L519.7 624.2L520.2 622.7L519.8 620.0L521.0 618.1L522.2 616.3L524.2 614.3L526.7 612.8L529.3 612.5L531.7 611.0L534.6 611.3L537.1 610.3L539.6 610.5L541.9 611.7L543.8 614.1L545.3 615.4L548.3 614.8L550.6 615.6L552.3 614.8L555.1 615.1L557.1 614.0" fill="none" stroke="#9fd5fc" stroke-width="1.7" stroke-linejoin="round" stroke-linecap="round" /><path d="M440.0 564.4L442.4 563.6L445.1 563.8L447.3 563.4L449.7 562.4L451.8 562.8L454.5 561.7L456.9 561.9L459.5 561.1L463.2 560.6L465.3 560.1L466.8 558.5L467.9 555.5L469.7 553.9L471.6 551.6L474.5 550.5L475.9 548.5L478.2 547.0L478.8 545.2" fill="none" stroke="#9fd5fc" stroke-width="1.7" stroke-linejoin="round" stroke-linecap="round" /><path d="M226.8 670.0L227.0 672.5L228.2 674.7L228.0 677.4L229.1 679.7L229.0 682.0L229.7 684.2L230.8 686.5L230.8 689.3L232.0 691.4L233.2 693.2L234.0 695.7L235.9 697.6L236.4 699.5L238.7 702.1L239.7 704.1L241.1 702.4L242.2 699.1L242.9 697.3L243.5 695.2L244.1 693.1L245.8 690.6L245.4 692.8L246.4 696.5L246.2 699.3L246.3 701.7L246.1 704.0L246.0 706.6L245.1 709.0L246.3 711.0L246.5 713.6L247.0 716.0L249.2 716.5L251.8 716.9L254.2 716.5L256.6 715.9L258.2 714.6L259.9 713.1L262.1 712.1L265.1 710.6L267.9 710.3L268.6 713.4L268.3 716.3L269.1 718.8L271.1 717.6L273.8 717.1L275.4 716.1L278.0 715.9L280.5 714.7L283.0 714.6L285.5 714.1L284.7 710.7L285.1 708.4L284.1 705.2L284.4 703.1L283.6 700.1L283.1 697.4L285.1 696.2L286.2 694.2L289.2 692.3L290.6 691.2L293.1 688.4L293.5 686.1L294.2 683.9L295.4 681.8L296.2 679.3L297.4 678.0L297.9 675.7L300.5 675.5L303.6 674.6L306.0 674.1L308.7 674.1L310.1 673.2L312.4 673.6L315.6 672.9L317.7 673.3L319.6 672.1L322.5 672.1L325.4 670.6L327.7 670.8L329.3 669.8" fill="none" stroke="#9fd5fc" stroke-width="1.7" stroke-linejoin="round" stroke-linecap="round" /><path d="M10.0 744.9L12.4 744.2L13.8 742.9L17.1 742.5L18.7 741.5L20.7 740.3L22.5 741.6L25.0 741.7L27.1 743.0L29.5 743.6L32.6 744.3L35.9 744.5" fill="none" stroke="#cfcfcf" stroke-width="1.0" stroke-linejoin="round" stroke-linecap="round" /><path d="M24.0 763.1L26.4 762.0L28.7 761.9L30.3 760.7L32.3 764.0L33.9 764.5L35.5 767.6L33.8 768.8L31.7 770.0L29.2 770.4L27.7 771.5L24.9 771.4L26.5 773.2L28.1 776.4L29.7 778.4L31.7 780.1L33.1 781.4L36.4 782.3L38.1 784.0L40.2 784.3L42.0 786.6L44.0 787.3L46.4 789.6L47.3 791.4" fill="none" stroke="#cfcfcf" stroke-width="1.0" stroke-linejoin="round" stroke-linecap="round" /><path d="M10.0 786.8L12.3 786.0L14.5 784.7L16.4 784.6L18.5 783.2L21.4 785.6L24.2 786.3L25.4 784.5L25.6 782.8L27.5 780.5" fill="none" stroke="#cfcfcf" stroke-width="1.0" stroke-linejoin="round" stroke-linecap="round" /><path d="M60.5 711.6L58.7 713.5L58.2 715.5L55.9 717.8L55.5 720.2L53.5 722.3L52.8 724.4" fill="none" stroke="#cfcfcf" stroke-width="1.0" stroke-linejoin="round" stroke-linecap="round" /><path d="M272.7 781.3L275.5 782.9L277.8 785.0L278.7 787.0L280.9 788.5L282.2 791.4L283.5 793.6L282.5 796.8L283.9 798.9L284.8 801.5L286.9 804.2L289.7 804.0L292.5 804.6L294.0 806.4L296.3 804.7L299.6 804.8L302.0 803.5L304.6 804.3L307.8 806.1L308.3 808.2L309.5 810.7L310.9 812.8L311.3 816.6L314.2 817.9L315.4 820.4L316.9 821.8L317.8 824.5L318.1 826.1L318.3 829.3L319.7 830.9L319.3 833.2L321.3 835.7L320.9 838.2" fill="none" stroke="#d0c9ba" stroke-width="1.8" stroke-linejoin="round" stroke-linecap="round" /><path d="M257.1 797.0L254.6 798.0L253.0 800.3L251.1 800.6L250.7 802.9L248.3 804.4L246.9 806.4L245.7 808.5L243.3 809.1L241.7 810.9L239.2 811.4L237.3 813.0L235.8 813.9L232.3 814.0L229.6 815.1L228.6 816.9L226.0 817.9L224.2 819.0L222.3 819.4L219.8 819.5" fill="none" stroke="#d0c9ba" stroke-width="1.8" stroke-linejoin="round" stroke-linecap="round" /><path d="M241.5 810.6L243.8 812.8L245.0 815.8L246.9 818.1L247.7 819.8L247.5 822.6L249.2 824.6L249.5 826.2L248.4 828.9L249.0 831.3L247.7 833.5L247.1 835.7L246.9 837.9" fill="none" stroke="#d0c9ba" stroke-width="1.8" stroke-linejoin="round" stroke-linecap="round" /><path d="M10.0 704.0L12.3 704.8L13.9 705.3L16.9 704.1L18.7 704.6L20.9 704.9L23.5 707.0L24.7 708.8L28.2 707.9L31.5 707.8L33.6 708.8L35.5 711.1L38.1 711.1L39.6 712.3L42.5 711.9L44.3 713.2L47.2 712.7L49.9 713.9L53.0 713.1L56.3 713.4L57.9 712.6L60.4 711.3" fill="none" stroke="#d0c9ba" stroke-width="1.8" stroke-linejoin="round" stroke-linecap="round" /><path d="M60.5 687.9L60.5 690.5L59.8 693.3L57.7 696.4L59.3 699.3L58.5 701.7L59.7 705.1L60.8 708.7L63.2 710.1L65.7 710.7L68.1 711.3L70.8 713.3L72.0 715.4L74.2 717.2L76.4 717.3L78.9 716.7L80.9 715.6L82.9 717.8L83.6 719.9L85.4 721.1L85.6 723.9L85.6 725.7L85.6 728.8L86.8 730.1L89.0 731.3L91.9 731.4L94.1 732.9L96.6 733.0L99.7 732.3L102.4 732.4L104.6 732.7L107.7 733.9L110.3 733.3L113.1 734.4L116.4 734.0L119.3 735.6L121.8 734.6L123.7 737.0L126.4 737.9L123.3 740.4L121.9 742.9L119.5 743.8L117.1 745.6L115.8 748.2L113.7 748.9L112.2 750.6L111.3 752.7L108.7 753.9L108.2 755.9L105.2 757.4L105.4 760.1L106.8 762.0L106.4 764.2L108.2 766.3L111.2 768.3L112.2 766.0L114.1 765.0L114.8 762.7L116.8 760.4L117.1 757.6L119.6 758.9L121.8 758.4L122.1 761.9L123.8 764.3L124.3 767.3L123.7 771.0L125.0 773.5L125.3 776.0L125.5 779.3L125.8 782.1L127.4 784.5L126.9 787.6L128.2 790.8L127.9 793.2L126.8 795.7L125.8 797.1L123.4 798.2L121.6 799.4" fill="none" stroke="#d0c9ba" stroke-width="1.8" stroke-linejoin="round" stroke-linecap="round" /><path d="M69.1 698.7L71.4 700.7L72.2 703.2L74.7 704.9L77.5 706.1L80.1 706.1L83.1 705.9L86.0 706.1L89.0 705.1L91.7 705.5L94.9 705.8L97.3 705.6L99.4 704.7L102.4 704.6L104.7 704.7L107.3 706.2L110.9 705.5L113.1 706.5L115.1 704.8L117.0 704.4L119.4 703.5" fill="none" stroke="#d0c9ba" stroke-width="1.8" stroke-linejoin="round" stroke-linecap="round" /><path d="M60.5 711.6L59.3 714.3L59.6 716.7L57.9 720.0L59.8 722.0L60.1 725.0L61.3 726.7L64.1 728.8L65.4 731.3L68.1 732.6L70.0 733.4L69.8 736.3L68.5 737.9L68.6 740.7L66.3 742.3L64.5 745.8L66.0 748.1L65.8 752.1L67.4 754.4L67.2 757.1L69.2 759.1L68.5 761.2L68.9 764.5L70.0 766.3L69.9 769.6L71.3 772.7L70.7 775.1L72.2 777.8L71.9 780.4L73.2 782.7L72.6 786.0L73.6 788.9" fill="none" stroke="#d0c9ba" stroke-width="1.8" stroke-linejoin="round" stroke-linecap="round" /><path d="M196.9 699.7L195.3 698.2L194.0 695.6L192.1 694.8L190.2 694.9L188.5 696.0L186.4 698.0L184.1 698.8L181.1 698.8L179.7 699.4L177.8 701.4L174.9 701.4L173.1 703.7L171.1 703.3L168.9 704.9L167.4 706.1L166.7 708.9L165.2 710.9L164.7 713.5L163.5 715.5L164.3 718.1L162.7 719.7L163.2 722.2L162.2 724.4L161.6 726.6L159.8 728.8L158.8 730.3L158.5 732.5L158.1 734.8L157.8 737.4L157.5 739.7L155.9 743.7L155.8 745.9L155.1 748.0L152.6 749.9L151.4 752.1L149.6 752.9L146.9 752.5L143.3 752.9L141.0 752.9L139.9 755.7L138.6 757.5L137.1 759.1L136.9 761.3L136.7 764.6L135.1 767.3L136.1 769.8L134.6 773.0L134.3 776.1L135.0 778.2L133.2 780.7L132.9 783.8L131.0 785.5L129.7 789.2L127.9 790.9" fill="none" stroke="#d0c9ba" stroke-width="1.8" stroke-linejoin="round" stroke-linecap="round" /><path d="M233.4 816.4L230.2 817.4L227.3 816.7L226.0 817.7L222.6 817.4L220.4 819.3L218.9 819.6L216.1 819.5L214.2 820.8L212.6 822.3L209.6 822.8L208.7 824.8L208.1 827.9L206.0 829.4L206.6 832.4L204.6 835.6L203.9 838.2" fill="none" stroke="#d0c9ba" stroke-width="1.8" stroke-linejoin="round" stroke-linecap="round" /><path d="M84.4 545.5L83.7 548.5L81.4 550.7L81.6 552.9L79.1 555.4L81.0 557.2L82.1 561.1L84.3 562.2L84.7 565.1L84.1 568.1L84.3 571.3L84.3 574.2L82.6 575.6L82.3 578.3L83.1 580.9L85.5 583.7L86.1 586.1L87.8 587.6L90.9 589.2L93.0 590.6L93.9 593.1L96.8 592.9L98.5 594.9L101.7 594.9L103.2 595.0L105.8 597.0L108.3 597.8L111.4 597.6L114.2 598.8L116.5 600.3L118.4 601.3L121.0 600.5L123.4 602.2L126.1 601.5L127.8 602.0L130.4 602.6L132.9 604.1L134.8 605.0L137.6 605.4L139.7 605.0L141.9 606.9L144.0 605.8L146.7 607.0L148.9 606.1L151.8 607.1L153.9 605.4L157.2 605.7L159.5 604.2L161.6 605.5L164.1 608.4L166.2 609.6L167.8 611.2L167.9 614.3L170.0 615.9L170.6 617.6L174.0 618.4L175.0 620.5L177.3 619.9L179.9 620.0L182.0 621.4L184.9 619.2L186.5 616.5L189.6 616.8L192.1 616.6L194.7 614.8L197.5 613.5L199.2 610.8L199.9 608.4L198.5 605.4L199.8 602.5L199.9 600.4L202.4 598.5L202.6 595.7L204.0 593.4L204.2 591.2L203.6 589.3L201.3 587.0L201.5 584.7L202.4 583.3L203.3 579.7L204.9 578.3L206.8 577.5L209.1 575.4L211.4 577.4L214.0 577.5L216.0 579.6L217.6 580.8L217.7 584.6L219.5 586.8L220.7 589.3L223.1 590.3L224.6 591.9L225.6 594.1L228.1 594.3L230.3 595.9L231.8 597.9L234.2 598.0L235.0 600.1L237.4 601.4L240.1 602.1L242.0 603.0L244.5 604.6L246.9 605.1L250.5 604.9L252.7 605.5L255.4 603.6L257.0 603.5L260.1 604.2" fill="none" stroke="#7e7e7e" stroke-width="1.25" stroke-linejoin="round" stroke-linecap="round" /><path d="M210.4 607.4L211.7 610.6L213.9 612.2L214.4 615.2L216.6 616.9L216.6 619.7L218.6 621.1L218.7 624.1L219.8 626.1L221.5 628.8L221.3 632.1L223.0 634.5L222.5 637.1L224.8 639.4L224.8 641.7L223.7 644.8L224.0 647.4L225.6 651.1L224.4 653.3L224.6 655.6L226.1 658.2L226.1 660.6L225.1 662.2L226.6 665.0L223.1 667.0L221.6 669.4L220.7 672.1L218.6 673.9L218.8 676.9L215.7 678.5L214.8 681.1L214.9 683.8L216.9 685.3" fill="none" stroke="#7e7e7e" stroke-width="1.25" stroke-linejoin="round" stroke-linecap="round" /><path d="M229.9 676.7L231.6 674.6L233.2 673.1L234.6 672.2L237.4 674.6L237.5 676.9L239.2 679.1L240.8 680.8L241.4 684.1L243.0 686.3L245.6 688.5L247.7 689.2L250.8 689.3" fill="none" stroke="#7e7e7e" stroke-width="1.25" stroke-linejoin="round" stroke-linecap="round" /><path d="M12.5 547.5L14.3 548.5L17.3 548.1L19.9 549.3L22.6 547.7L25.5 548.0L27.4 546.2L29.9 545.1L31.8 544.3" fill="none" stroke="#7e7e7e" stroke-width="1.25" stroke-linejoin="round" stroke-linecap="round" /><path d="M282.2 545.5L282.2 547.4L280.8 549.5L279.8 552.0L276.9 552.5L274.8 555.3L272.8 556.4L271.7 558.2L271.4 561.1L269.1 563.2L271.2 565.1L270.9 567.5L273.1 569.0L270.5 571.9L269.8 574.4L270.4 576.5L271.7 578.5L272.9 580.4" fill="none" stroke="#7e7e7e" stroke-width="1.25" stroke-linejoin="round" stroke-linecap="round" /><path d="M252.0 575.2L254.4 573.6L258.0 573.6L260.2 574.0L261.3 576.1L263.6 576.2L265.3 578.6L268.9 578.5L270.2 579.7L273.3 580.5L273.8 582.3L276.5 584.8L276.9 587.1L277.0 589.4L274.9 590.5L272.1 592.3L269.7 593.1L267.0 595.3L266.0 591.4L264.0 589.0L262.2 588.1L260.8 586.6L257.7 586.2L255.8 583.0L253.0 581.4L251.7 579.3L252.7 576.9L251.4 575.2" fill="none" stroke="#7e7e7e" stroke-width="1.25" stroke-linejoin="round" stroke-linecap="round" /><path d="M250.0 604.5L252.7 604.6L254.7 602.7L256.9 603.4L256.9 600.5L257.3 597.4L258.8 594.4L261.0 593.2L262.9 593.4L265.5 591.9" fill="none" stroke="#7e7e7e" stroke-width="1.25" stroke-linejoin="round" stroke-linecap="round" /><path d="M273.4 580.0L275.0 578.6L276.7 577.8L279.1 576.7L282.5 576.8L285.0 574.6L285.6 576.9L287.6 578.9L287.7 581.2L290.8 581.6L292.0 583.6L294.2 583.4L296.5 585.1L299.8 584.8L301.9 585.4L302.9 588.4L304.5 589.2L305.1 592.2L305.6 594.6L306.7 597.5L305.9 599.7L308.9 600.2L309.9 602.4L312.8 603.1L314.3 604.1L317.6 603.6L319.2 605.2L321.6 601.7L324.5 600.9L327.1 599.3L330.2 600.3" fill="none" stroke="#7e7e7e" stroke-width="1.25" stroke-linejoin="round" stroke-linecap="round" /><path d="M330.1 599.6L328.6 597.3L328.9 594.4L329.7 592.9L330.8 589.8L330.8 587.7L334.0 587.0L336.8 587.9L339.0 587.6L337.8 583.8L337.8 582.4L337.6 579.1L339.4 576.1L342.0 574.4L340.7 572.3L338.2 571.7L337.4 568.8L337.3 566.2L338.3 563.9L340.5 561.7L342.8 560.0L345.8 560.6L347.7 559.9L351.0 559.5L354.2 560.4L356.3 562.0L357.2 558.1L358.7 555.7L361.6 554.5L363.7 555.7L367.2 555.2L369.2 552.1L371.5 551.2L370.0 548.9L370.8 545.3" fill="none" stroke="#7e7e7e" stroke-width="1.25" stroke-linejoin="round" stroke-linecap="round" /><path d="M325.2 545.5L326.5 548.9L328.6 550.5L330.3 552.6L332.7 552.9L334.6 555.3L336.5 552.8L339.2 552.1L337.7 548.1L338.5 545.4" fill="none" stroke="#7e7e7e" stroke-width="1.25" stroke-linejoin="round" stroke-linecap="round" /><path d="M330.1 599.6L333.2 600.0L335.7 602.3L338.2 602.6L341.6 602.7L343.8 602.2L346.3 603.6L347.6 606.0L349.2 607.0L352.5 606.6L353.7 607.1L356.5 608.1L359.2 609.1L361.1 611.4L363.5 611.9L365.3 613.2L368.2 612.0L370.3 614.9L372.4 616.1L375.4 616.6L377.8 619.3L381.1 619.6L383.0 620.7L384.5 623.2L386.4 624.5L388.8 625.6L391.7 625.7L393.4 627.2L394.7 629.3L393.5 631.1L394.0 633.8L392.5 636.3L390.2 637.2L388.6 639.1L384.6 639.0L381.9 639.9L379.0 640.2L377.1 642.0L374.6 641.4L372.2 643.6L370.0 643.1L369.7 646.9L367.8 649.3L369.7 650.8L369.5 653.8L371.5 655.0L373.2 656.7L375.3 656.5L376.9 660.1L379.4 661.6L378.6 664.6L379.9 666.2L380.5 668.8L379.8 671.4L381.4 674.5L380.4 676.8L380.4 679.5L378.4 682.4L380.6 684.8L380.5 687.3L382.5 690.2" fill="none" stroke="#7e7e7e" stroke-width="1.25" stroke-linejoin="round" stroke-linecap="round" /><path d="M386.7 624.0L385.6 621.5L385.0 619.3L385.9 616.0L386.1 613.4L384.8 610.1L385.4 607.4L387.4 607.1L389.8 605.0L391.8 604.9L393.6 601.7L394.2 599.4L391.6 598.3L389.2 598.6L386.9 596.9L384.4 594.9L387.1 594.8L389.5 593.3L392.7 594.4L394.9 593.2L397.4 595.0L400.5 594.0L403.2 595.1L405.0 594.6L407.2 593.2L405.8 591.2L405.5 588.0L403.6 586.2L403.8 582.8L403.0 581.4L400.7 579.4L401.0 576.3L400.3 573.8L398.8 572.4L398.1 569.4" fill="none" stroke="#7e7e7e" stroke-width="1.25" stroke-linejoin="round" stroke-linecap="round" /><path d="M407.2 593.7L408.7 596.4L411.1 598.4L411.6 600.9L414.5 601.7L415.7 604.1L418.4 604.9L419.7 606.8L422.7 606.4L424.4 608.3L426.9 607.9L429.1 609.1L432.7 607.7L434.9 609.1L437.5 607.7L439.6 608.7L442.1 607.5L445.4 608.1L447.5 607.5L449.9 609.0" fill="none" stroke="#7e7e7e" stroke-width="1.25" stroke-linejoin="round" stroke-linecap="round" /><path d="M368.2 612.7L368.8 614.6L368.4 617.3L369.6 619.0L366.3 621.4L365.6 624.3L364.0 626.3L364.3 629.5L364.0 632.0L360.2 633.6L358.2 635.4L355.6 637.4L353.3 637.1L352.1 640.8L351.9 643.6L349.7 645.0L347.0 647.0L346.1 649.8L343.9 648.0L341.4 648.1L340.0 646.0L336.4 648.3L333.8 647.7L331.9 647.5L329.9 645.3L327.9 644.9L326.7 647.0L325.5 648.6L325.5 650.7L326.9 652.5L326.4 655.4L324.8 657.0L321.9 657.5L322.4 661.3L322.7 664.1L325.6 665.0L327.7 667.6L329.3 668.8L331.3 669.6L333.0 672.5L333.3 675.2L336.9 675.2L338.7 677.1L342.2 675.4L343.0 671.7L345.4 670.3L347.1 669.3L348.6 670.5L350.9 669.0L353.9 666.5L356.4 667.1L358.5 666.5L359.6 668.8L362.3 670.4L362.9 672.2L366.2 671.9L368.3 671.5L369.4 673.0L369.8 676.8L371.4 679.0L374.5 680.1L376.2 679.5L377.4 678.2L378.5 680.1L378.5 682.7" fill="none" stroke="#7e7e7e" stroke-width="1.25" stroke-linejoin="round" stroke-linecap="round" /><path d="M380.9 665.0L382.1 661.8L382.9 660.2L384.4 657.0L386.5 656.4L387.8 654.2L390.9 653.8L393.3 652.2L396.4 652.3L398.2 650.6L401.5 651.6L404.4 651.2L406.2 649.7L408.0 651.6L411.8 651.0L414.0 652.6L417.3 652.8L419.6 654.9L422.1 654.7L423.9 656.2L427.1 657.2L429.9 656.5L432.0 658.5L434.6 658.0L437.4 659.6L439.9 658.3L443.5 658.8L445.9 659.5L447.7 660.5L448.9 662.7L449.5 665.3" fill="none" stroke="#7e7e7e" stroke-width="1.25" stroke-linejoin="round" stroke-linecap="round" /><path d="M304.7 690.0L304.4 687.2L305.9 684.9L306.1 682.6L306.4 680.3L308.4 678.9L308.0 676.4L311.4 676.8L313.7 676.0L316.3 674.2L318.8 676.1L321.5 675.6L324.0 677.5L325.7 678.1L326.6 679.8L326.6 682.8L329.6 682.7L331.4 684.5L334.1 684.1L334.6 687.8L336.4 689.9" fill="none" stroke="#7e7e7e" stroke-width="1.25" stroke-linejoin="round" stroke-linecap="round" /><path d="M447.8 545.5L447.6 547.9L446.2 550.9L443.6 551.4L441.3 552.8L440.4 555.3" fill="none" stroke="#7e7e7e" stroke-width="1.25" stroke-linejoin="round" stroke-linecap="round" /><path d="M465.4 560.5L465.5 558.6L467.9 556.4L468.1 554.5L471.4 552.8L472.0 550.6L475.6 549.3L476.8 546.8L478.7 545.1" fill="none" stroke="#7e7e7e" stroke-width="1.25" stroke-linejoin="round" stroke-linecap="round" /><path d="M465.4 560.5L467.4 561.2L469.4 564.4L471.4 565.2L473.2 567.4L475.1 567.2L476.8 569.8L479.5 568.9L481.5 568.8L484.7 570.0L486.9 568.7L489.0 566.5L489.2 564.1L491.9 564.5L494.1 564.3L496.6 563.0L497.8 565.9L499.4 566.7L501.0 569.0L503.2 569.5L506.2 571.9L507.8 570.1L510.3 569.7L511.9 567.6L514.0 569.9L515.6 570.5L518.4 570.6L519.9 569.6L520.2 567.5L522.6 565.7L523.9 564.3L527.1 564.0L528.6 562.3L529.3 559.2L532.4 559.5L533.6 557.9" fill="none" stroke="#7e7e7e" stroke-width="1.25" stroke-linejoin="round" stroke-linecap="round" /><path d="M486.9 569.3L488.6 570.8L489.5 572.9L492.1 574.9L493.5 576.1L496.8 576.3L498.5 577.5L501.3 578.1L504.2 579.4L506.1 581.7L509.2 581.9L510.8 583.2L512.3 585.2L514.6 585.3L513.8 588.3L515.6 591.7L515.6 594.6L516.3 597.0L518.1 599.4L520.3 600.3L522.2 601.7L526.0 602.2L528.0 600.4L528.5 598.3L531.1 599.8L532.4 602.8L532.6 605.1L531.1 607.5L528.3 608.6L526.0 608.6L524.8 610.9L523.5 614.1L523.7 617.5L521.7 620.0L523.6 622.6L526.4 623.5L526.0 626.3L527.4 627.8L529.3 628.0L531.4 630.0L533.3 629.6L535.6 631.1L538.1 630.6L541.6 631.5L544.0 633.5L546.4 634.7L549.5 635.4L551.8 635.7L555.1 637.2L557.1 634.1L559.3 633.6" fill="none" stroke="#7e7e7e" stroke-width="1.25" stroke-linejoin="round" stroke-linecap="round" /><path d="M486.9 569.3L488.9 571.1L490.1 573.5L493.0 575.9L491.6 577.5L490.9 580.5L489.4 581.8L487.5 581.4L484.9 580.4L483.3 578.4L480.9 580.9L479.0 581.5L476.9 581.6L475.9 585.3L476.8 588.0L473.9 589.4L473.7 591.4L470.8 592.3L469.4 596.2L467.6 597.8L469.2 599.5L472.4 600.2L472.6 602.4L473.6 604.5L474.5 606.7L477.3 606.1L479.5 607.8L482.0 607.7L481.3 609.8L481.7 611.9L482.4 614.2L481.6 616.0L480.8 617.9L478.4 619.7L477.2 621.8L477.0 624.3L475.5 626.2L474.9 628.3L476.6 629.7L477.3 631.4L480.1 632.0L481.7 634.1L483.1 636.7L482.7 638.7L484.6 641.4L483.0 643.5L483.4 646.6L481.7 649.3L484.7 651.9L486.2 654.0" fill="none" stroke="#7e7e7e" stroke-width="1.25" stroke-linejoin="round" stroke-linecap="round" /><path d="M440.0 608.4L442.1 608.1L444.8 609.3L447.9 608.8L447.8 611.7L449.5 613.1L449.4 615.8L451.2 618.0L453.3 619.5L455.9 618.9L457.5 620.4L459.9 620.4L462.2 623.2L465.6 623.5L468.7 625.4L471.1 626.3L474.2 627.8L475.8 630.3" fill="none" stroke="#7e7e7e" stroke-width="1.25" stroke-linejoin="round" stroke-linecap="round" /><path d="M485.9 654.3L487.9 653.0L490.9 652.7L492.5 650.9L495.9 652.9L498.4 653.9L496.5 655.0L494.9 657.4L496.9 658.7L498.9 658.5L500.1 657.2L502.3 657.1L504.8 655.8L507.0 655.4L509.4 657.1L512.4 656.6L514.1 658.8L515.8 662.4" fill="none" stroke="#7e7e7e" stroke-width="1.25" stroke-linejoin="round" stroke-linecap="round" /><path d="M440.0 660.1L441.9 658.0L444.7 656.9L445.4 654.6L447.8 656.0L448.6 657.4L448.5 661.1L450.5 662.3L451.3 665.6L452.3 667.2L453.2 670.6" fill="none" stroke="#7e7e7e" stroke-width="1.25" stroke-linejoin="round" stroke-linecap="round" /><path d="M451.7 665.0L453.8 663.4L455.4 662.8L457.8 662.5L460.3 660.3L463.1 660.7L465.2 658.7L467.4 658.2L469.4 655.9L471.4 655.5L473.9 654.8L476.6 656.3L479.0 656.8L481.0 655.3L483.5 655.3L485.8 653.9" fill="none" stroke="#7e7e7e" stroke-width="1.25" stroke-linejoin="round" stroke-linecap="round" /><path d="M535.7 630.8L536.1 632.9L538.2 635.5L536.2 638.7L535.1 641.4L534.5 643.8L531.5 646.2L528.3 648.0L526.1 648.9L526.8 651.1L526.4 653.4L525.3 655.2L522.5 657.7L519.5 658.7L518.5 660.8L515.9 661.7L517.1 664.2L516.8 666.8L518.8 668.7L518.1 671.1L520.0 673.8L519.8 676.8L521.2 679.7L520.5 681.7L518.5 682.4L515.9 683.9L514.4 685.8L511.4 685.2L508.5 687.0L506.5 688.6L504.2 689.7" fill="none" stroke="#7e7e7e" stroke-width="1.25" stroke-linejoin="round" stroke-linecap="round" /><path d="M521.1 681.6L523.3 681.7L525.9 680.2L527.8 682.2L530.1 683.2" fill="none" stroke="#7e7e7e" stroke-width="1.25" stroke-linejoin="round" stroke-linecap="round" /><path d="M453.7 670.0L453.8 672.6L455.8 675.2L455.1 678.0L454.2 680.3L451.4 681.1L450.3 684.2L449.0 686.1L449.7 688.9L449.5 691.6L449.1 694.1L451.2 696.0L451.3 699.5L452.1 701.9L450.7 703.9L451.5 707.2L451.5 709.2L452.7 712.5L455.0 714.4L455.4 717.0L454.4 719.0L454.3 721.7L452.0 724.4L452.4 727.1L453.6 729.3L453.3 732.6" fill="none" stroke="#7e7e7e" stroke-width="1.25" stroke-linejoin="round" stroke-linecap="round" /><path d="M388.5 791.9L390.6 789.5L393.3 788.3L395.0 787.0L396.7 785.8L398.1 784.0L400.4 783.9L400.5 780.5L402.3 777.6L404.5 776.3L406.0 773.9L407.7 773.8L409.5 771.2L410.7 768.4L413.1 766.4L413.1 763.5L414.6 760.8L414.0 758.2L414.4 755.9L416.9 754.6L419.0 751.3L421.9 750.6L421.6 747.9L423.2 744.7L424.1 742.4L421.8 739.6L420.8 736.6L423.7 734.8L424.9 732.0L427.7 733.8L431.5 733.8L433.7 732.0L435.8 730.1L439.5 730.1L441.7 727.8L444.1 730.5L446.4 730.7L447.5 733.0L450.7 733.0L453.7 733.3L456.4 730.8L458.8 731.0L461.7 731.9L463.7 733.0L462.3 736.8L463.3 739.5L459.6 741.1L458.0 743.7L460.5 743.7L462.3 743.8L464.4 745.5L467.0 743.4L469.0 743.2L472.0 741.7L474.6 741.8L476.9 739.8L480.4 739.9L481.9 738.1L483.8 737.1L485.5 734.0L487.0 736.8L486.5 740.4L489.4 741.0L492.1 742.6L493.4 744.9L495.2 747.0L495.1 749.0L497.3 751.8L497.3 754.1L499.2 755.5L500.3 757.5L500.6 760.5L501.8 763.1L503.9 764.5" fill="none" stroke="#7e7e7e" stroke-width="1.25" stroke-linejoin="round" stroke-linecap="round" /><path d="M400.0 715.9L402.0 714.6L405.7 713.3L407.2 716.4L409.8 717.3L410.5 719.1L411.8 721.1L414.0 722.5L412.1 723.8L411.2 727.0L409.5 728.4L409.0 731.6L407.2 733.1L407.2 735.6L409.6 737.6L411.5 738.7L413.5 739.7L415.3 742.6L417.1 740.1L419.8 738.6L421.1 736.0" fill="none" stroke="#7e7e7e" stroke-width="1.25" stroke-linejoin="round" stroke-linecap="round" /><path d="M518.2 670.0L519.3 672.7L520.0 674.3L520.0 677.8L521.8 679.5L522.4 681.6L525.7 682.8L526.6 685.0L526.9 687.4L528.9 689.0L528.6 691.6L531.0 693.1L534.0 693.6L536.6 695.7L539.1 694.6L542.0 694.0L544.5 694.1L545.7 696.3L548.5 698.1L550.6 699.0L552.5 701.6" fill="none" stroke="#7e7e7e" stroke-width="1.25" stroke-linejoin="round" stroke-linecap="round" /><path d="M521.1 680.7L518.9 682.6L515.3 683.3L513.0 684.0L510.8 686.1L509.5 687.0L506.3 687.3L504.3 689.9L501.2 691.1L501.7 694.1L500.0 695.2L500.0 697.8L497.7 699.8L496.9 702.6L494.6 704.5L493.1 706.7L492.8 709.9L490.8 710.9L490.5 714.4L488.4 715.6L488.3 717.8L486.5 719.9L485.5 721.6L485.5 724.9L483.9 725.7L483.3 728.7L481.8 731.0L481.9 734.5L480.8 736.3L480.8 738.7L479.8 740.2" fill="none" stroke="#7e7e7e" stroke-width="1.25" stroke-linejoin="round" stroke-linecap="round" /><path d="M231.7 672.0L234.4 672.9L235.5 675.5L237.9 675.3L238.5 678.3L240.7 681.2L241.8 683.5L243.2 687.0L246.0 688.1L248.0 689.1L250.3 687.9L250.9 690.5L253.5 693.1L253.6 696.0L255.7 697.1L255.8 699.7L258.0 700.8L258.8 703.4L260.4 704.6L260.9 707.1L263.3 708.9L264.0 712.6L265.1 714.1L267.2 716.7L269.1 718.0L271.7 718.3" fill="none" stroke="#7e7e7e" stroke-width="1.25" stroke-linejoin="round" stroke-linecap="round" /><path d="M329.4 672.0L328.7 674.5L327.0 675.7L327.0 678.1L326.9 680.1L327.9 681.7L329.0 683.9L331.5 683.9L333.3 684.8L335.1 687.0L334.2 688.5L332.6 689.8L330.1 690.5L326.3 689.8L324.3 690.2L322.0 687.4L319.3 687.1L319.8 689.7L321.0 692.4L318.6 693.3L316.1 696.0L313.4 695.3L310.7 695.7L308.9 696.8L307.0 695.3L304.4 695.3L302.0 695.8L299.5 696.7L297.4 699.6L296.8 701.3L294.5 702.9L296.5 705.0L296.3 707.0L298.7 708.8L300.8 710.0L303.4 709.2L306.0 709.3L308.4 711.0L309.6 713.3L309.9 715.4L308.6 718.8L307.7 721.6L305.5 722.4L307.1 725.1L306.6 728.6L309.2 731.1L312.1 732.1L310.5 734.6L310.3 738.5L308.7 741.1L308.5 744.2L310.6 744.9L311.5 747.5L314.9 747.3L317.6 745.8L319.0 748.4L321.8 749.8L325.2 750.2L327.5 750.7L330.0 752.5L332.5 752.5L332.2 755.8L333.7 758.8L330.4 760.8L329.7 763.1L327.2 763.1L325.2 764.2" fill="none" stroke="#7e7e7e" stroke-width="1.25" stroke-linejoin="round" stroke-linecap="round" /><path d="M309.8 738.4L312.5 738.8L313.4 741.0L315.9 740.1L318.9 738.3L321.7 739.0L324.6 738.6L326.3 740.2L329.5 739.7L331.7 739.5L333.0 738.1L335.0 737.0L337.3 737.0L339.3 734.6L341.3 734.9L342.5 732.2L345.0 731.2L346.6 728.2L349.6 729.9L353.1 729.8L354.9 732.0L357.1 732.2L358.4 734.0L360.3 731.6L362.4 730.6L364.8 730.5L366.8 729.2L368.9 728.7L371.6 726.9L374.5 727.3L375.8 725.2L378.8 725.1L379.9 723.3L382.6 722.1L383.8 719.5" fill="none" stroke="#7e7e7e" stroke-width="1.25" stroke-linejoin="round" stroke-linecap="round" /><path d="M305.9 675.9L307.3 678.4L307.3 681.9L307.4 684.2L306.3 685.8L309.0 687.1L312.0 686.9L313.8 686.5L317.5 687.6L319.7 687.4" fill="none" stroke="#7e7e7e" stroke-width="1.25" stroke-linejoin="round" stroke-linecap="round" /><path d="M329.4 672.0L332.6 672.2L334.6 673.7L337.3 673.3L340.0 673.9L342.3 673.1L345.1 672.4L347.2 670.7L349.6 670.0L352.9 670.4" fill="none" stroke="#7e7e7e" stroke-width="1.25" stroke-linejoin="round" stroke-linecap="round" /><path d="M366.5 670.0L367.1 672.3L368.7 673.5L368.8 676.2L372.6 677.6L374.0 680.2L377.2 681.4L379.4 681.1L380.6 678.8L381.8 676.1L381.1 673.0L380.7 669.9" fill="none" stroke="#7e7e7e" stroke-width="1.25" stroke-linejoin="round" stroke-linecap="round" /><path d="M379.2 681.7L379.5 684.4L381.4 686.6L381.7 689.7L381.9 692.8L381.6 694.5L379.5 697.2L378.3 699.9L375.7 701.8L377.3 700.9L379.6 702.2L382.2 701.6L383.2 704.6L385.3 706.9L384.5 709.8L382.6 710.6L381.8 712.8L383.3 715.1L384.2 717.7L383.6 720.0L387.2 717.9L390.1 718.5L392.2 716.7L395.9 717.7L398.6 716.6L401.9 715.7L403.7 714.1L405.7 715.5L408.5 714.3L409.6 717.4L410.5 718.7L413.0 720.4L412.6 724.3L413.8 726.6L410.6 728.3L408.0 730.0L408.6 733.1L406.8 736.3L410.0 737.2L410.7 738.6L413.6 738.9L414.8 740.7L417.4 741.8L419.8 742.7" fill="none" stroke="#7e7e7e" stroke-width="1.25" stroke-linejoin="round" stroke-linecap="round" /><path d="M221.6 753.0L222.8 756.3L223.3 758.3L223.4 761.9L226.7 763.9L227.7 766.2L229.2 768.2L230.7 770.1L232.0 771.4L231.4 774.3L229.0 776.1L229.9 778.5L228.4 781.1L229.3 783.4L231.4 784.3L235.1 785.5L237.7 784.6L238.5 788.0L240.7 788.9L242.0 790.7L243.3 792.9L246.2 792.6L247.0 794.8L250.5 792.3L253.3 792.4L255.7 789.5L256.0 792.6L257.9 795.1L257.5 797.1L260.3 797.1L261.7 799.5L264.9 798.6L266.9 799.7L265.9 795.7L267.2 793.5L266.0 791.1L266.5 788.8L264.9 786.0L265.4 783.2L265.3 781.2L266.5 778.3L269.4 778.8L272.8 777.8L275.2 777.1L276.6 775.2L278.3 773.9L281.3 775.5L284.5 775.1L285.8 777.0L288.6 778.0L289.9 776.2L292.4 775.4L292.8 773.1L296.0 774.8L297.7 777.1L299.6 774.6L301.2 772.9L303.6 771.1L307.7 771.6L309.9 772.1L311.6 770.6L311.7 768.4L314.4 767.1L316.5 766.2L317.6 765.2L319.4 763.3L322.1 765.2L324.7 765.2L325.4 768.3L328.1 769.1L330.4 769.7L332.4 769.6L335.3 770.2L337.6 771.6L341.2 771.0L342.1 773.3L343.7 776.2L341.3 779.9L341.8 782.6L342.4 785.2L345.4 786.8L346.8 789.0L348.6 790.3L351.1 790.8L353.9 792.1L356.8 791.5L359.3 793.1L362.7 792.7" fill="none" stroke="#bcad6a" stroke-width="2.4" stroke-linejoin="round" stroke-linecap="round" /><path d="M10.0 672.9L12.6 674.6L12.9 676.8L15.5 678.3L15.9 680.9L19.5 680.2L21.7 678.8L23.5 680.4L24.2 683.5L26.4 684.5L28.7 683.6L31.3 682.9L33.9 684.1L35.9 686.4L38.1 686.5L40.4 686.6L41.7 687.8L44.4 687.5L46.9 688.3L50.7 686.5L53.0 687.2L55.6 685.5L58.3 684.8L60.6 685.0L62.2 683.6L64.2 683.6L66.9 683.3L67.5 685.6L68.3 688.2L69.6 690.3L71.4 692.0L71.3 694.7L72.7 696.4L73.5 694.3L73.5 692.0L75.1 690.3L75.1 688.4L78.1 686.6L78.3 684.3L81.0 684.1L83.2 681.8L85.4 681.9L87.6 681.7L91.5 683.5L93.7 684.0L95.8 684.1L98.0 686.0L99.9 687.5L102.0 685.8L104.4 685.4L106.7 686.2L108.5 687.8L108.8 690.0L111.4 691.9L113.0 693.6L115.6 693.6L117.1 696.1L117.3 697.9L119.2 700.0L120.1 702.8L121.5 703.8L123.5 702.8L126.1 703.5L129.1 704.6L131.0 704.0L134.0 703.9L136.8 703.6L140.0 701.3L142.3 702.4L145.2 700.1L147.2 699.4L147.6 697.4L149.1 695.0L151.7 694.1L154.3 693.6L156.3 691.7L158.6 691.8L160.5 689.5L163.1 689.4L164.4 687.5L166.6 686.5L169.4 685.7L171.1 685.0L172.8 682.1L175.8 682.1L178.8 681.1L180.8 680.8L184.0 681.8L186.5 681.8L187.9 683.8L190.7 683.4L192.5 685.1L195.2 683.9L197.0 684.6L199.0 683.3L200.4 682.2L199.9 679.2L201.7 677.3L203.6 676.3L205.7 676.7L207.7 677.3L209.8 679.4L210.6 681.8L212.2 684.9L213.9 686.2L214.7 689.3L217.2 690.4L218.9 693.8L220.3 695.5L219.4 698.5L221.0 700.8L219.5 704.0L220.3 706.6L219.0 708.8L219.9 711.6L218.2 714.7L218.7 718.1L217.8 720.3L216.2 722.1L213.7 723.8L211.4 726.1L209.5 728.7L209.1 731.1L206.9 733.3L206.2 735.2L204.6 737.8L203.9 739.8L203.8 741.8L205.9 744.7L203.8 747.3L203.6 750.2L201.7 752.1L204.1 752.2L207.1 752.3L208.9 752.7L211.9 753.8L214.2 753.1L216.2 752.0L219.3 753.2L221.4 755.1" fill="none" stroke="#bcad6a" stroke-width="2.4" stroke-linejoin="round" stroke-linecap="round" /><path d="M587.5 742.7L585.5 760.8" stroke="#c9ba7e" stroke-width="2.4" fill="none"/><path d="M573.8 791.0L562.0 805.7" stroke="#c9ba7e" stroke-width="2.4" fill="none"/><path d="M545.8 834.5L543.0 838.0" stroke="#c9ba7e" stroke-width="2.4" fill="none"/><path d="M685.5 567.0L682.0 578.7" stroke="#c9c3ae" stroke-width="2.4" fill="none"/><path d="M564.4 639.9L588.2 633.3" stroke="#8c8c8c" stroke-width="1.5" stroke-dasharray="4.5 2.2" fill="none"/><path d="M446.9 783.3L438.1 797M458.6 782.3L471.3 788.8M451.5 783.2L458.6 782.6" stroke="#8c8c8c" stroke-width="2" fill="none"/><g fill="#909090" class="mt" font-size="10.4" letter-spacing="-0.6" stroke="#fff" stroke-width="1.2" paint-order="stroke" stroke-linejoin="round"><text x="299.9" y="570.0">甘肃</text><text x="356.2" y="586.5">陕西</text><text x="436.4" y="584.4">河南</text><text x="521.7" y="590.9">江苏</text><text x="492.7" y="628.4">安徽</text><text x="417.4" y="634.0">湖北</text><text x="273.4" y="647.0">四川</text><text x="330.4" y="662.5">重庆</text><text x="405.9" y="694.5">湖南</text><text x="465.7" y="692.3">江西</text><text x="533.9" y="670.0">浙江</text><text x="334.4" y="710.0">贵州</text><text x="250.4" y="752.5">云南</text><text x="367.5" y="761.3">广西</text><text x="502.1" y="725.8">福建</text><text x="551.5" y="758.4">台湾</text><text x="375.9" y="836.8">海南</text></g><path d="M390.3 817L403 815.7" stroke="#8c8c8c" stroke-width="1.5" stroke-dasharray="5 2.5" fill="none"/><g fill="#909090" class="mt" font-size="10.4" letter-spacing="-0.6" stroke="#fff" stroke-width="1.2" paint-order="stroke" stroke-linejoin="round"><text x="437.4" y="760.0">广东</text></g><g fill="#909090" class="mt" font-size="10.4" letter-spacing="-0.8" stroke="#fff" stroke-width="1.6" paint-order="stroke" stroke-linejoin="round"><text x="560.5" y="633.6">上海</text></g><g fill="#9aa3ad" class="mt" font-size="10.4" letter-spacing="-0.6" stroke="#fff" stroke-width="1.6" paint-order="stroke" stroke-linejoin="round"><text x="480.9" y="792.0">香港</text></g><g fill="#8d9aa8" class="mt" font-size="10.4" letter-spacing="-0.6" stroke="#fff" stroke-width="1.6" paint-order="stroke" stroke-linejoin="round"><text x="420.2" y="810.0">澳门</text></g><g fill="#4a78b4" class="mt" font-size="12.2" font-weight="500" letter-spacing="-0.4" stroke="#fff" stroke-width="2" paint-order="stroke" stroke-linejoin="round"><text x="574.5" y="565.1">黄海</text><text x="593.6" y="691.8">东海</text></g><g fill="#3c3c3c" class="mt" font-size="13.2" font-weight="500" letter-spacing="-0.3" stroke="#fff" stroke-width="1.5" paint-order="stroke" stroke-linejoin="round"><text x="65.8" y="754.2">孟加拉国</text><text x="159.4" y="797.6">缅甸</text><text x="264.9" y="823.0">老挝</text></g><g fill="#909090" class="mt" font-size="10.4" letter-spacing="-0.6"><text x="407.9" y="547.2">山西</text><text x="171.9" y="546.6">青海</text></g><g fill="#d9363a" class="mt" font-size="18" font-weight="500" letter-spacing="2.4"><text x="231.1" y="548.7">中华人民共和国</text></g><defs><radialGradient id="pg" cx="0.36" cy="0.26" r="0.8"><stop offset="0" stop-color="#f45a58"/><stop offset="0.35" stop-color="#ee2d2f"/><stop offset="1" stop-color="#e3262a"/></radialGradient><filter id="bl" x="-50%" y="-50%" width="200%" height="200%"><feGaussianBlur stdDeviation="1.1"/></filter><filter id="bl2" x="-50%" y="-50%" width="200%" height="200%"><feGaussianBlur stdDeviation="1.6"/></filter><linearGradient id="bg1" x1="0" y1="0" x2="0" y2="1"><stop offset="0" stop-color="#fff"/><stop offset="1" stop-color="#ececec"/></linearGradient></defs><path d="M566.7 629.4L453.6 780" stroke="#058205" stroke-width="4" stroke-linecap="round" fill="none" opacity=".96"/><ellipse cx="575.2" cy="624.0" rx="6.5" ry="2.3" transform="rotate(-24 575.2 624.0)" fill="#2a3a48" opacity=".42" filter="url(#bl)"/><path transform="translate(566.7,629.4)" d="M0 0C-1.6 -5.2 -10.3 -9.2 -10.3 -16.3A10.3 10.3 0 1 1 10.3 -16.3C10.3 -9.2 1.6 -5.2 0 0Z" fill="url(#pg)" stroke="#cf1f24" stroke-width=".9"/><path transform="translate(566.7,629.4)" d="M-7.2 -19.5A8 8 0 0 1 -1.5 -24.2" fill="none" stroke="#f9a09c" stroke-width="1.1" stroke-linecap="round" opacity=".8"/><ellipse cx="462.1" cy="774.6" rx="6.5" ry="2.3" transform="rotate(-24 462.1 774.6)" fill="#2a3a48" opacity=".42" filter="url(#bl)"/><path transform="translate(453.6,780.0)" d="M0 0C-1.6 -5.2 -10.3 -9.2 -10.3 -16.3A10.3 10.3 0 1 1 10.3 -16.3C10.3 -9.2 1.6 -5.2 0 0Z" fill="url(#pg)" stroke="#cf1f24" stroke-width=".9"/><path transform="translate(453.6,780.0)" d="M-7.2 -19.5A8 8 0 0 1 -1.5 -24.2" fill="none" stroke="#f9a09c" stroke-width="1.1" stroke-linecap="round" opacity=".8"/><rect x="483.4" y="697" width="57.6" height="25.4" rx="5" fill="#000" opacity=".5" filter="url(#bl)"/><rect x="481.7" y="692.5" width="59.3" height="28" rx="4.8" fill="#fff" stroke="#e0393c" stroke-width="1.8"/><clipPath id="lbc"><rect x="482.6" y="693.4" width="57.5" height="26.2" rx="4"/></clipPath><path d="M566.7 629.4L453.6 780" stroke="#058205" stroke-width="4" fill="none" opacity=".2" clip-path="url(#lbc)"/><text x="488.2" y="711.2" font-family="Liberation Sans, sans-serif" font-size="15" fill="#1a1a1a" textLength="46.6" lengthAdjust="spacingAndGlyphs">1223km</text><path d="M105.2 582.6V588.6H181.6V582.6" fill="none" stroke="#fff" stroke-width="5" stroke-linecap="square" opacity=".9"/><path d="M105.2 583.2V588.6H181.6V583.2" fill="none" stroke="#000" stroke-width="2.8"/><text x="119.3" y="581.3" font-family="Liberation Sans, sans-serif" font-size="12.6" font-weight="bold" fill="#222" stroke="#fff" stroke-width="2.2" paint-order="stroke" textLength="21.5" lengthAdjust="spacingAndGlyphs">500</text><g fill="#222" class="mt" font-size="12.6" font-weight="bold" letter-spacing="-0.4" stroke="#fff" stroke-width="2.2" paint-order="stroke" stroke-linejoin="round"><text x="143.2" y="581.4">公里</text></g><circle cx="48.5" cy="580.4" r="22.4" fill="#000" opacity=".28" filter="url(#bl)"/><circle cx="48.4" cy="579.6" r="21.8" fill="url(#bg1)" stroke="#a8a8a8" stroke-width="1.4"/><path d="M43 567.9L48.2 562.6L53.5 567.9M43 591.2L48.2 596.5L53.5 591.2M37.2 574.4L31.2 579.6L37.2 584.8M59.4 574.4L65.4 579.6L59.4 584.8" fill="none" stroke="#4273d9" stroke-width="2.4"/><rect x="45.3" y="624" width="6" height="120" fill="#f4f4f4" stroke="#b4b4b4" stroke-width="1"/><path d="M46 630.0H50.6M46 635.9H50.6M46 641.8H50.6M46 647.7H50.6M46 653.6H50.6M46 659.5H50.6M46 665.4H50.6M46 671.3H50.6M46 677.2H50.6M46 683.1H50.6M46 689.0H50.6M46 694.9H50.6M46 700.8H50.6M46 706.7H50.6M46 712.6H50.6M46 718.5H50.6M46 724.4H50.6" stroke="#d8d8d8" stroke-width=".8"/><rect x="45.8" y="734" width="5" height="9.5" fill="#86b2f5"/><rect x="39.6" y="609.2" width="19" height="19.0" rx="2" fill="#000" opacity=".3" filter="url(#bl)"/><rect x="38.9" y="608.2" width="18.6" height="19.0" rx="2.2" fill="url(#bg1)" stroke="#9c9c9c" stroke-width="1"/><path d="M43.8 617.9H52.8M48.3 613.4V622.4" stroke="#4a7ce0" stroke-width="2.1"/><rect x="39.6" y="725.0" width="19" height="10.2" rx="2" fill="#000" opacity=".3" filter="url(#bl)"/><rect x="38.9" y="724.0" width="18.6" height="10.2" rx="2.2" fill="url(#bg1)" stroke="#9c9c9c" stroke-width="1"/><path d="M43.6 729.3H53" stroke="#5a8cec" stroke-width="2.1"/><rect x="39.6" y="744.0" width="19" height="18.6" rx="2" fill="#000" opacity=".3" filter="url(#bl)"/><rect x="38.9" y="743.0" width="18.6" height="18.6" rx="2.2" fill="url(#bg1)" stroke="#9c9c9c" stroke-width="1"/><path d="M43.6 752.5H53" stroke="#5a8cec" stroke-width="2.1"/><rect x="902" y="557.8" width="95.4" height="35.8" fill="#fff" stroke="#8e8e8e" stroke-width="1"/><g fill="#111" class="mt" font-size="18" letter-spacing="-0.1"><text x="914.0" y="583.4">全屏显示</text></g><text x="17.6" y="835.2" font-family="Liberation Sans, sans-serif" font-weight="bold" font-size="17.2" fill="#fff" stroke="#fff" stroke-width="3.2" stroke-linejoin="round" textLength="26" lengthAdjust="spacingAndGlyphs">Bai</text><g fill="#fff" stroke="#fff" stroke-width="3.2" stroke-linejoin="round"><ellipse cx="47.7" cy="820.2" rx="2.9" ry="3.6" transform="rotate(-25 47.7 820.2)"/><ellipse cx="53.9" cy="814.7" rx="2.7" ry="3.9" transform="rotate(-8 53.9 814.7)"/><ellipse cx="61.3" cy="815.1" rx="2.7" ry="3.9" transform="rotate(8 61.3 815.1)"/><ellipse cx="65.8" cy="821.8" rx="3" ry="3.5" transform="rotate(25 65.8 821.8)"/><path d="M56.9 821C60.5 821 62.5 824.5 64.8 826.6C67.5 829 67.6 833 65.5 834.8C63 836.8 60 835.4 56.9 835.4C53.8 835.4 50.8 836.8 48.3 834.8C46.2 833 46.3 829 49 826.6C51.3 824.5 53.3 821 56.9 821Z"/></g><g fill="#fff" class="mt" font-size="12.8" font-weight="bold" letter-spacing="-0.2" stroke="#fff" stroke-width="3.2" paint-order="stroke" stroke-linejoin="round"><text x="69.8" y="834.2">地图</text></g><text x="17.6" y="835.2" font-family="Liberation Sans, sans-serif" font-weight="bold" font-size="17.2" fill="#e10a0a" textLength="26" lengthAdjust="spacingAndGlyphs">Bai</text><g fill="#2a2fdc"><ellipse cx="47.7" cy="820.2" rx="2.9" ry="3.6" transform="rotate(-25 47.7 820.2)"/><ellipse cx="53.9" cy="814.7" rx="2.7" ry="3.9" transform="rotate(-8 53.9 814.7)"/><ellipse cx="61.3" cy="815.1" rx="2.7" ry="3.9" transform="rotate(8 61.3 815.1)"/><ellipse cx="65.8" cy="821.8" rx="3" ry="3.5" transform="rotate(25 65.8 821.8)"/><path d="M56.9 821C60.5 821 62.5 824.5 64.8 826.6C67.5 829 67.6 833 65.5 834.8C63 836.8 60 835.4 56.9 835.4C53.8 835.4 50.8 836.8 48.3 834.8C46.2 833 46.3 829 49 826.6C51.3 824.5 53.3 821 56.9 821Z"/></g><g fill="#e10a0a" class="mt" font-size="12.8" font-weight="bold" letter-spacing="-0.2"><text x="69.8" y="834.2">地图</text></g><text x="50" y="833.4" font-family="Liberation Sans, sans-serif" font-weight="bold" font-size="9.6" fill="#fff" textLength="13.6" lengthAdjust="spacingAndGlyphs">du</text><rect x="841.5" y="696.2" width="170" height="145" fill="#fff" stroke="#9a9a9a" stroke-width="1"/><clipPath id="ovc"><rect x="848.2" y="702.8" width="160.3" height="140"/></clipPath><g clip-path="url(#ovc)"><rect x="848" y="702" width="161" height="140" fill="#a1d6fa"/><path d="M845.5 700.8L946.0 700.8L940.5 710.8L946.8 717.0L953.0 727.0L958.0 737.0L960.0 740.8L953.0 743.2L959.2 748.2L956.8 754.5L960.5 758.2L956.8 764.5L954.2 773.2L946.8 782.0L943.0 789.5L938.0 797.0L930.5 804.5L920.5 812.0L910.5 817.0L900.5 822.0L890.5 825.8L880.5 828.2L873.0 832.0L871.0 829.0L868.0 833.2L870.0 839.5L845.5 839.5Z" fill="#f8f8f8"/><path d="M955.5 797.0L960.0 799.5L959.2 807.0L955.5 817.0L951.8 824.5L948.5 819.5L946.0 813.2L947.5 805.8L951.0 800.0Z" fill="#f8f8f8"/><path d="M994.2 705.8L999.2 702.5L1010.5 700.8L1010.5 712.0L1003.0 715.8L995.5 717.0L993.0 712.0Z" fill="#f8f8f8"/><path d="M993.0 725.2L997.0 724.8L997.2 727.2L993.2 727.8Z" fill="#f8f8f8"/><path d="M1003.5 788.0L1006.0 784.5L1007.5 785.5L1005.0 789.5Z" fill="#f8f8f8"/><path d="M979.5 790.8L981.0 790.5L981.0 792.2L979.5 792.2Z" fill="#f8f8f8"/><path d="M971.0 792.5L972.5 792.2L972.5 794.0L971.0 794.0Z" fill="#f8f8f8"/><path d="M941.5 810.0L943.0 810.0L943.0 811.5L941.5 811.5Z" fill="#f8f8f8"/><path d="M913.0 830.8L914.5 830.8L914.5 832.2L913.0 832.2Z" fill="#f8f8f8"/><path d="M871.8 710.8L872.0 712.5L873.2 714.4L876.0 713.8L877.8 713.3L880.0 712.2L883.1 711.7L885.4 710.5L887.6 711.2L891.0 711.3L892.9 711.8L895.5 711.9L898.3 711.9L899.9 711.3L902.5 710.9L905.5 710.9L906.8 709.3L909.0 707.7L911.1 705.8L912.4 704.0L914.1 702.3" fill="none" stroke="#9fd5fc" stroke-width="1.9" stroke-linejoin="round"/><path d="M848.0 759.5L849.3 757.5L851.0 755.6L853.2 753.4L854.6 751.7L857.0 750.4L859.1 748.1L861.6 748.1L864.7 747.3L868.0 747.3L870.3 747.4L872.7 748.5L875.4 748.7L878.0 749.6L879.6 750.7L881.7 752.3L883.7 754.5L885.6 755.7L887.2 757.2L890.4 759.3L892.8 761.0L894.1 759.3L896.4 757.6L898.1 755.8L899.5 754.6L900.7 752.6L902.8 750.6L905.4 752.1L908.1 753.1L910.1 754.8L911.9 756.7L914.1 758.4L916.6 757.0L918.2 756.4L920.6 756.0L921.9 753.9L924.6 751.5L926.0 749.0L927.8 746.9L930.3 744.9L932.3 743.1L934.1 740.6L936.5 739.2L938.7 737.5L940.4 735.6L943.0 736.9L944.6 737.1L946.7 738.5L950.1 737.3L953.0 737.2L956.2 739.1L957.9 740.9" fill="none" stroke="#9fd5fc" stroke-width="1.9" stroke-linejoin="round"/><path d="M966.8 801.5L966.0 811.5" fill="none" stroke="#c9ba7e" stroke-width="2.4"/><path d="M960.5 825.8L954.2 834.0" fill="none" stroke="#c9ba7e" stroke-width="2.4"/><path d="M847.5 825.8L854.2 827.5" fill="none" stroke="#c9ba7e" stroke-width="2.4"/><g fill="#d23a3e" class="mt" font-size="9" font-weight="bold" letter-spacing="-1.2"><text x="847.3" y="705.6">中华人民</text></g></g><rect x="848.2" y="702.8" width="165" height="140" fill="none" stroke="#8a8a8a" stroke-width="1"/></svg>
</div>
</body></html>
